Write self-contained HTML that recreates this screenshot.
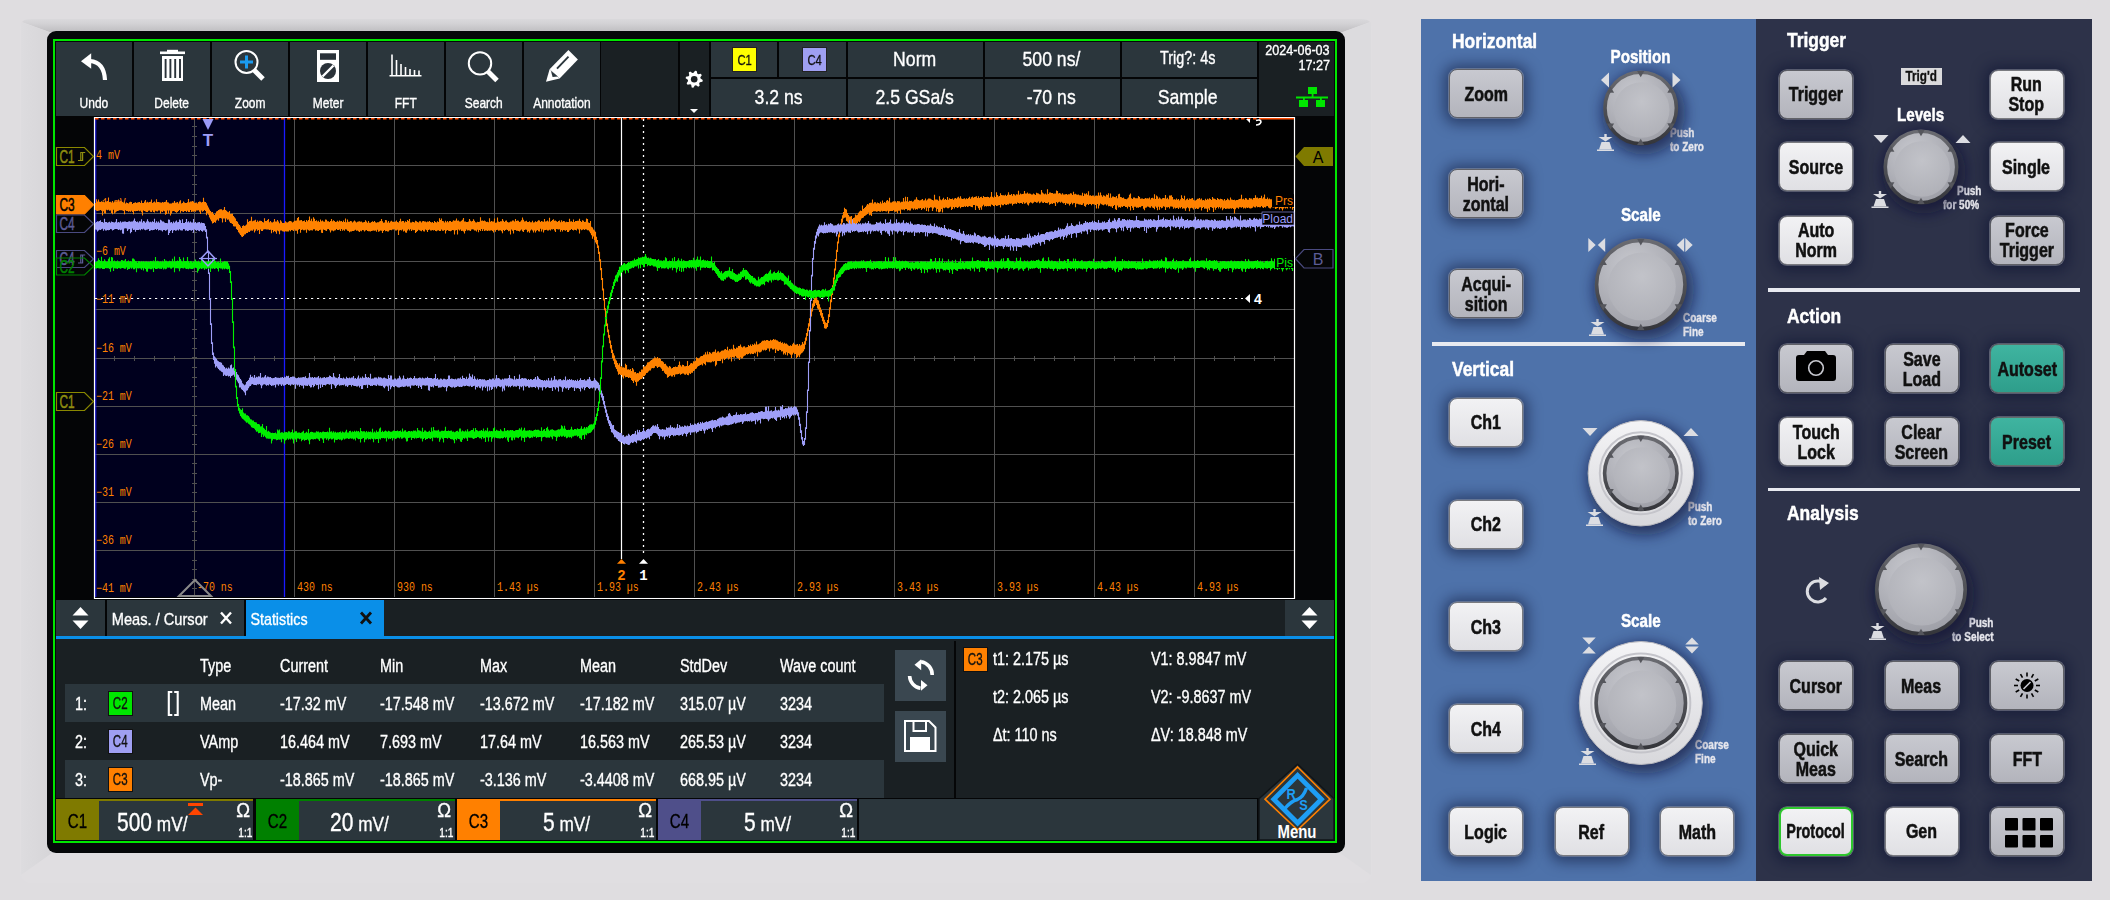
<!DOCTYPE html>
<html><head><meta charset="utf-8">
<style>
*{box-sizing:border-box;margin:0;padding:0}
html,body{width:2110px;height:900px;overflow:hidden;background:#dfdde0;font-family:"Liberation Sans",sans-serif;}
.a{position:absolute}
.t{position:absolute;white-space:nowrap;text-align:center;color:#fff;-webkit-text-stroke:.35px currentColor}
.sx{display:inline-block;transform:scaleX(.8);transform-origin:50% 50%}
#frame{left:47px;top:31px;width:1298px;height:822px;border-radius:9px;background:#050709}
#green{left:53px;top:39px;width:1284px;height:804px;border:2px solid #00e600}
.tb{background:#2a3239}
.dk{background:#1b2023}
</style></head><body>
<svg class="a" style="left:0;top:0" width="2110" height="900">
<defs><linearGradient id="bvt" x1="0" y1="0" x2="0" y2="1"><stop offset="0" stop-color="#dad9dc"/><stop offset=".35" stop-color="#d2d1d4"/><stop offset="1" stop-color="#bcbbbe"/></linearGradient>
<linearGradient id="bvl" x1="0" y1="0" x2="1" y2="0"><stop offset="0" stop-color="#dddcdf"/><stop offset="1" stop-color="#d6d5d8"/></linearGradient></defs>
<rect x="20" y="19" width="1352" height="864" rx="11" fill="#e0dee1"/>
<path d="M22 22Q24 19 31 19H1361Q1368 19 1370 22L1340 33H52Z" fill="url(#bvt)"/>
<path d="M21 22L52 33V853L21 875Z" fill="url(#bvl)"/>
<path d="M1371 22L1340 33V853L1371 875Z" fill="#dcdbde"/>
</svg>
<div class="a" id="frame"></div>
<div class="a" id="green"></div>
<div class="a" style="left:56px;top:42px;width:1278px;height:798px;background:#040506;"></div>
<div class="a" style="left:56px;top:42px;width:76px;height:74px;background:#2b363c;"></div>
<div class="t" style="left:-206px;width:600px;top:94.0px;line-height:18.0px;font-size:15px;color:#fff;font-weight:normal;font-family:"Liberation Sans",sans-serif;"><span class="sx" style="transform:scaleX(0.8)">Undo</span></div>
<div class="a" style="left:134px;top:42px;width:76px;height:74px;background:#2b363c;"></div>
<div class="t" style="left:-128px;width:600px;top:94.0px;line-height:18.0px;font-size:15px;color:#fff;font-weight:normal;font-family:"Liberation Sans",sans-serif;"><span class="sx" style="transform:scaleX(0.8)">Delete</span></div>
<div class="a" style="left:212px;top:42px;width:76px;height:74px;background:#2b363c;"></div>
<div class="t" style="left:-50px;width:600px;top:94.0px;line-height:18.0px;font-size:15px;color:#fff;font-weight:normal;font-family:"Liberation Sans",sans-serif;"><span class="sx" style="transform:scaleX(0.8)">Zoom</span></div>
<div class="a" style="left:290px;top:42px;width:76px;height:74px;background:#2b363c;"></div>
<div class="t" style="left:28px;width:600px;top:94.0px;line-height:18.0px;font-size:15px;color:#fff;font-weight:normal;font-family:"Liberation Sans",sans-serif;"><span class="sx" style="transform:scaleX(0.8)">Meter</span></div>
<div class="a" style="left:368px;top:42px;width:76px;height:74px;background:#2b363c;"></div>
<div class="t" style="left:106px;width:600px;top:94.0px;line-height:18.0px;font-size:15px;color:#fff;font-weight:normal;font-family:"Liberation Sans",sans-serif;"><span class="sx" style="transform:scaleX(0.8)">FFT</span></div>
<div class="a" style="left:446px;top:42px;width:76px;height:74px;background:#2b363c;"></div>
<div class="t" style="left:184px;width:600px;top:94.0px;line-height:18.0px;font-size:15px;color:#fff;font-weight:normal;font-family:"Liberation Sans",sans-serif;"><span class="sx" style="transform:scaleX(0.8)">Search</span></div>
<div class="a" style="left:524px;top:42px;width:76px;height:74px;background:#2b363c;"></div>
<div class="t" style="left:262px;width:600px;top:94.0px;line-height:18.0px;font-size:15px;color:#fff;font-weight:normal;font-family:"Liberation Sans",sans-serif;"><span class="sx" style="transform:scaleX(0.8)">Annotation</span></div>
<div class="a" style="left:601px;top:42px;width:77px;height:74px;background:#1a2023;"></div>
<div class="a" style="left:680px;top:42px;width:29px;height:74px;background:#1a2023;"></div>
<div class="a" style="left:711px;top:42px;width:66px;height:35px;background:#2b363c;"></div>
<div class="a" style="left:779px;top:42px;width:67px;height:35px;background:#2b363c;"></div>
<div class="a" style="left:848px;top:42px;width:135px;height:35px;background:#2b363c;"></div>
<div class="a" style="left:985px;top:42px;width:135px;height:35px;background:#2b363c;"></div>
<div class="a" style="left:1122px;top:42px;width:135px;height:35px;background:#2b363c;"></div>
<div class="a" style="left:711px;top:79px;width:135px;height:37px;background:#2b363c;"></div>
<div class="a" style="left:848px;top:79px;width:135px;height:37px;background:#2b363c;"></div>
<div class="a" style="left:985px;top:79px;width:135px;height:37px;background:#2b363c;"></div>
<div class="a" style="left:1122px;top:79px;width:135px;height:37px;background:#2b363c;"></div>
<div class="a" style="left:1259px;top:42px;width:75px;height:74px;background:#1a2023;"></div>
<div class="t" style="left:615px;width:600px;top:46.4px;line-height:25.2px;font-size:21px;color:#fff;font-weight:normal;font-family:"Liberation Sans",sans-serif;"><span class="sx" style="transform:scaleX(0.84)">Norm</span></div>
<div class="t" style="left:751px;width:600px;top:46.4px;line-height:25.2px;font-size:21px;color:#fff;font-weight:normal;font-family:"Liberation Sans",sans-serif;"><span class="sx" style="transform:scaleX(0.84)">500 ns/</span></div>
<div class="t" style="left:888px;width:600px;top:48.2px;line-height:21.6px;font-size:18px;color:#fff;font-weight:normal;font-family:"Liberation Sans",sans-serif;"><span class="sx" style="transform:scaleX(0.8)">Trig?: 4s</span></div>
<div class="t" style="left:479px;width:600px;top:84.4px;line-height:25.2px;font-size:21px;color:#fff;font-weight:normal;font-family:"Liberation Sans",sans-serif;"><span class="sx" style="transform:scaleX(0.84)">3.2 ns</span></div>
<div class="t" style="left:615px;width:600px;top:84.4px;line-height:25.2px;font-size:21px;color:#fff;font-weight:normal;font-family:"Liberation Sans",sans-serif;"><span class="sx" style="transform:scaleX(0.84)">2.5 GSa/s</span></div>
<div class="t" style="left:751px;width:600px;top:84.4px;line-height:25.2px;font-size:21px;color:#fff;font-weight:normal;font-family:"Liberation Sans",sans-serif;"><span class="sx" style="transform:scaleX(0.84)">-70 ns</span></div>
<div class="t" style="left:888px;width:600px;top:84.4px;line-height:25.2px;font-size:21px;color:#fff;font-weight:normal;font-family:"Liberation Sans",sans-serif;"><span class="sx" style="transform:scaleX(0.84)">Sample</span></div>
<div class="a" style="left:732px;top:47px;width:25px;height:25px;background:#ffff00;border:1px solid #222;"></div>
<div class="t" style="left:444.5px;width:600px;top:50.5px;line-height:18.0px;font-size:15px;color:#111;font-weight:normal;font-family:"Liberation Sans",sans-serif;-webkit-text-stroke:0;"><span class="sx" style="transform:scaleX(0.75)">C1</span></div>
<div class="a" style="left:802px;top:47px;width:25px;height:25px;background:#9f9ff2;border:1px solid #222;"></div>
<div class="t" style="left:514.5px;width:600px;top:50.5px;line-height:18.0px;font-size:15px;color:#111;font-weight:normal;font-family:"Liberation Sans",sans-serif;-webkit-text-stroke:0;"><span class="sx" style="transform:scaleX(0.75)">C4</span></div>
<div class="t" style="right:780px;text-align:right;top:41.6px;line-height:16.8px;font-size:14px;color:#fff;font-weight:normal;font-family:"Liberation Sans",sans-serif;-webkit-text-stroke:0;"><span class="sx" style="transform:scaleX(0.9);transform-origin:100% 50%">2024-06-03</span></div>
<div class="t" style="right:780px;text-align:right;top:56.6px;line-height:16.8px;font-size:14px;color:#fff;font-weight:normal;font-family:"Liberation Sans",sans-serif;-webkit-text-stroke:0;"><span class="sx" style="transform:scaleX(0.9);transform-origin:100% 50%">17:27</span></div>
<div class="a" style="left:56px;top:600px;width:49px;height:36px;background:#2b363c;"></div>
<div class="a" style="left:107px;top:600px;width:137px;height:36px;background:#2b363c;"></div>
<div class="a" style="left:246px;top:600px;width:138px;height:36px;background:#0a8fe8;"></div>
<div class="a" style="left:384px;top:600px;width:901px;height:36px;background:#1a2023;"></div>
<div class="a" style="left:1285px;top:600px;width:49px;height:36px;background:#2b363c;"></div>
<div class="a" style="left:56px;top:636px;width:1278px;height:3px;background:#0a8fe8;"></div>
<div class="t" style="left:-140px;width:600px;top:609.8px;line-height:20.4px;font-size:17px;color:#fff;font-weight:normal;font-family:"Liberation Sans",sans-serif;"><span class="sx" style="transform:scaleX(0.86)">Meas. / Cursor</span></div>
<div class="t" style="left:-21px;width:600px;top:609.8px;line-height:20.4px;font-size:17px;color:#fff;font-weight:normal;font-family:"Liberation Sans",sans-serif;"><span class="sx" style="transform:scaleX(0.84)">Statistics</span></div>
<div class="a" style="left:56px;top:639px;width:1278px;height:159px;background:#1a2023;"></div>
<div class="a" style="left:65px;top:684px;width:819px;height:38px;background:#2b363c;"></div>
<div class="a" style="left:65px;top:760px;width:819px;height:38px;background:#2b363c;"></div>
<div class="a" style="left:954px;top:641px;width:2px;height:157px;background:#050607;"></div>
<div class="a" style="left:56px;top:799px;width:1278px;height:41px;background:#040506;"></div>
<div class="a" style="left:56px;top:799px;width:197px;height:41px;background:#2b363c;"></div>
<div class="a" style="left:99px;top:799px;width:154px;height:2px;background:#7f7a00;"></div>
<div class="a" style="left:56px;top:799px;width:43px;height:41px;background:#7f7a00;"></div>
<div class="a" style="left:256px;top:799px;width:199px;height:41px;background:#2b363c;"></div>
<div class="a" style="left:299px;top:799px;width:156px;height:2px;background:#008000;"></div>
<div class="a" style="left:256px;top:799px;width:43px;height:41px;background:#008000;"></div>
<div class="a" style="left:457px;top:799px;width:199px;height:41px;background:#2b363c;"></div>
<div class="a" style="left:500px;top:799px;width:156px;height:2px;background:#ff8000;"></div>
<div class="a" style="left:457px;top:799px;width:43px;height:41px;background:#ff8000;"></div>
<div class="a" style="left:658px;top:799px;width:199px;height:41px;background:#2b363c;"></div>
<div class="a" style="left:701px;top:799px;width:156px;height:2px;background:#4f4f8a;"></div>
<div class="a" style="left:658px;top:799px;width:43px;height:41px;background:#4f4f8a;"></div>
<div class="a" style="left:859px;top:799px;width:398px;height:41px;background:#2b363c;"></div>

<div class="t" style="left:200px;text-align:left;top:656.2px;line-height:21.6px;font-size:18px;color:#fff;font-weight:normal;font-family:"Liberation Sans",sans-serif;"><span class="sx" style="transform:scaleX(0.8);transform-origin:0 50%">Type</span></div>

<div class="t" style="left:280px;text-align:left;top:656.2px;line-height:21.6px;font-size:18px;color:#fff;font-weight:normal;font-family:"Liberation Sans",sans-serif;"><span class="sx" style="transform:scaleX(0.8);transform-origin:0 50%">Current</span></div>

<div class="t" style="left:380px;text-align:left;top:656.2px;line-height:21.6px;font-size:18px;color:#fff;font-weight:normal;font-family:"Liberation Sans",sans-serif;"><span class="sx" style="transform:scaleX(0.8);transform-origin:0 50%">Min</span></div>

<div class="t" style="left:480px;text-align:left;top:656.2px;line-height:21.6px;font-size:18px;color:#fff;font-weight:normal;font-family:"Liberation Sans",sans-serif;"><span class="sx" style="transform:scaleX(0.8);transform-origin:0 50%">Max</span></div>

<div class="t" style="left:580px;text-align:left;top:656.2px;line-height:21.6px;font-size:18px;color:#fff;font-weight:normal;font-family:"Liberation Sans",sans-serif;"><span class="sx" style="transform:scaleX(0.8);transform-origin:0 50%">Mean</span></div>

<div class="t" style="left:680px;text-align:left;top:656.2px;line-height:21.6px;font-size:18px;color:#fff;font-weight:normal;font-family:"Liberation Sans",sans-serif;"><span class="sx" style="transform:scaleX(0.8);transform-origin:0 50%">StdDev</span></div>

<div class="t" style="left:780px;text-align:left;top:656.2px;line-height:21.6px;font-size:18px;color:#fff;font-weight:normal;font-family:"Liberation Sans",sans-serif;"><span class="sx" style="transform:scaleX(0.8);transform-origin:0 50%">Wave count</span></div>
<div class="t" style="left:75px;text-align:left;top:694.2px;line-height:21.6px;font-size:18px;color:#fff;font-weight:normal;font-family:"Liberation Sans",sans-serif;"><span class="sx" style="transform:scaleX(0.8);transform-origin:0 50%">1:</span></div>
<div class="a" style="left:108px;top:691px;width:25px;height:25px;background:#00e600;border:1px solid #111;"></div>
<div class="t" style="left:-179.5px;width:600px;top:693.9px;line-height:19.2px;font-size:16px;color:#111;font-weight:normal;font-family:"Liberation Sans",sans-serif;-webkit-text-stroke:0;"><span class="sx" style="transform:scaleX(0.72)">C2</span></div>
<div class="t" style="left:200px;text-align:left;top:694.2px;line-height:21.6px;font-size:18px;color:#fff;font-weight:normal;font-family:"Liberation Sans",sans-serif;"><span class="sx" style="transform:scaleX(0.8);transform-origin:0 50%">Mean</span></div>
<div class="t" style="left:280px;text-align:left;top:694.2px;line-height:21.6px;font-size:18px;color:#fff;font-weight:normal;font-family:"Liberation Sans",sans-serif;"><span class="sx" style="transform:scaleX(0.8);transform-origin:0 50%">-17.32 mV</span></div>
<div class="t" style="left:380px;text-align:left;top:694.2px;line-height:21.6px;font-size:18px;color:#fff;font-weight:normal;font-family:"Liberation Sans",sans-serif;"><span class="sx" style="transform:scaleX(0.8);transform-origin:0 50%">-17.548 mV</span></div>
<div class="t" style="left:480px;text-align:left;top:694.2px;line-height:21.6px;font-size:18px;color:#fff;font-weight:normal;font-family:"Liberation Sans",sans-serif;"><span class="sx" style="transform:scaleX(0.8);transform-origin:0 50%">-13.672 mV</span></div>
<div class="t" style="left:580px;text-align:left;top:694.2px;line-height:21.6px;font-size:18px;color:#fff;font-weight:normal;font-family:"Liberation Sans",sans-serif;"><span class="sx" style="transform:scaleX(0.8);transform-origin:0 50%">-17.182 mV</span></div>
<div class="t" style="left:680px;text-align:left;top:694.2px;line-height:21.6px;font-size:18px;color:#fff;font-weight:normal;font-family:"Liberation Sans",sans-serif;"><span class="sx" style="transform:scaleX(0.8);transform-origin:0 50%">315.07 µV</span></div>
<div class="t" style="left:780px;text-align:left;top:694.2px;line-height:21.6px;font-size:18px;color:#fff;font-weight:normal;font-family:"Liberation Sans",sans-serif;"><span class="sx" style="transform:scaleX(0.8);transform-origin:0 50%">3234</span></div>
<div class="t" style="left:75px;text-align:left;top:732.2px;line-height:21.6px;font-size:18px;color:#fff;font-weight:normal;font-family:"Liberation Sans",sans-serif;"><span class="sx" style="transform:scaleX(0.8);transform-origin:0 50%">2:</span></div>
<div class="a" style="left:108px;top:729px;width:25px;height:25px;background:#9f9ff2;border:1px solid #111;"></div>
<div class="t" style="left:-179.5px;width:600px;top:731.9px;line-height:19.2px;font-size:16px;color:#111;font-weight:normal;font-family:"Liberation Sans",sans-serif;-webkit-text-stroke:0;"><span class="sx" style="transform:scaleX(0.72)">C4</span></div>
<div class="t" style="left:200px;text-align:left;top:732.2px;line-height:21.6px;font-size:18px;color:#fff;font-weight:normal;font-family:"Liberation Sans",sans-serif;"><span class="sx" style="transform:scaleX(0.8);transform-origin:0 50%">VAmp</span></div>
<div class="t" style="left:280px;text-align:left;top:732.2px;line-height:21.6px;font-size:18px;color:#fff;font-weight:normal;font-family:"Liberation Sans",sans-serif;"><span class="sx" style="transform:scaleX(0.8);transform-origin:0 50%">16.464 mV</span></div>
<div class="t" style="left:380px;text-align:left;top:732.2px;line-height:21.6px;font-size:18px;color:#fff;font-weight:normal;font-family:"Liberation Sans",sans-serif;"><span class="sx" style="transform:scaleX(0.8);transform-origin:0 50%">7.693 mV</span></div>
<div class="t" style="left:480px;text-align:left;top:732.2px;line-height:21.6px;font-size:18px;color:#fff;font-weight:normal;font-family:"Liberation Sans",sans-serif;"><span class="sx" style="transform:scaleX(0.8);transform-origin:0 50%">17.64 mV</span></div>
<div class="t" style="left:580px;text-align:left;top:732.2px;line-height:21.6px;font-size:18px;color:#fff;font-weight:normal;font-family:"Liberation Sans",sans-serif;"><span class="sx" style="transform:scaleX(0.8);transform-origin:0 50%">16.563 mV</span></div>
<div class="t" style="left:680px;text-align:left;top:732.2px;line-height:21.6px;font-size:18px;color:#fff;font-weight:normal;font-family:"Liberation Sans",sans-serif;"><span class="sx" style="transform:scaleX(0.8);transform-origin:0 50%">265.53 µV</span></div>
<div class="t" style="left:780px;text-align:left;top:732.2px;line-height:21.6px;font-size:18px;color:#fff;font-weight:normal;font-family:"Liberation Sans",sans-serif;"><span class="sx" style="transform:scaleX(0.8);transform-origin:0 50%">3234</span></div>
<div class="t" style="left:75px;text-align:left;top:770.2px;line-height:21.6px;font-size:18px;color:#fff;font-weight:normal;font-family:"Liberation Sans",sans-serif;"><span class="sx" style="transform:scaleX(0.8);transform-origin:0 50%">3:</span></div>
<div class="a" style="left:108px;top:767px;width:25px;height:25px;background:#ff8000;border:1px solid #111;"></div>
<div class="t" style="left:-179.5px;width:600px;top:769.9px;line-height:19.2px;font-size:16px;color:#111;font-weight:normal;font-family:"Liberation Sans",sans-serif;-webkit-text-stroke:0;"><span class="sx" style="transform:scaleX(0.72)">C3</span></div>
<div class="t" style="left:200px;text-align:left;top:770.2px;line-height:21.6px;font-size:18px;color:#fff;font-weight:normal;font-family:"Liberation Sans",sans-serif;"><span class="sx" style="transform:scaleX(0.8);transform-origin:0 50%">Vp-</span></div>
<div class="t" style="left:280px;text-align:left;top:770.2px;line-height:21.6px;font-size:18px;color:#fff;font-weight:normal;font-family:"Liberation Sans",sans-serif;"><span class="sx" style="transform:scaleX(0.8);transform-origin:0 50%">-18.865 mV</span></div>
<div class="t" style="left:380px;text-align:left;top:770.2px;line-height:21.6px;font-size:18px;color:#fff;font-weight:normal;font-family:"Liberation Sans",sans-serif;"><span class="sx" style="transform:scaleX(0.8);transform-origin:0 50%">-18.865 mV</span></div>
<div class="t" style="left:480px;text-align:left;top:770.2px;line-height:21.6px;font-size:18px;color:#fff;font-weight:normal;font-family:"Liberation Sans",sans-serif;"><span class="sx" style="transform:scaleX(0.8);transform-origin:0 50%">-3.136 mV</span></div>
<div class="t" style="left:580px;text-align:left;top:770.2px;line-height:21.6px;font-size:18px;color:#fff;font-weight:normal;font-family:"Liberation Sans",sans-serif;"><span class="sx" style="transform:scaleX(0.8);transform-origin:0 50%">-3.4408 mV</span></div>
<div class="t" style="left:680px;text-align:left;top:770.2px;line-height:21.6px;font-size:18px;color:#fff;font-weight:normal;font-family:"Liberation Sans",sans-serif;"><span class="sx" style="transform:scaleX(0.8);transform-origin:0 50%">668.95 µV</span></div>
<div class="t" style="left:780px;text-align:left;top:770.2px;line-height:21.6px;font-size:18px;color:#fff;font-weight:normal;font-family:"Liberation Sans",sans-serif;"><span class="sx" style="transform:scaleX(0.8);transform-origin:0 50%">3234</span></div>
<div class="a" style="left:963px;top:647px;width:25px;height:25px;background:#ff8000;border:1px solid #111;"></div>
<div class="t" style="left:675.5px;width:600px;top:649.9px;line-height:19.2px;font-size:16px;color:#111;font-weight:normal;font-family:"Liberation Sans",sans-serif;-webkit-text-stroke:0;"><span class="sx" style="transform:scaleX(0.72)">C3</span></div>
<div class="t" style="left:993px;text-align:left;top:649.2px;line-height:21.6px;font-size:18px;color:#fff;font-weight:normal;font-family:"Liberation Sans",sans-serif;"><span class="sx" style="transform:scaleX(0.8);transform-origin:0 50%">t1: 2.175 µs</span></div>
<div class="t" style="left:1151px;text-align:left;top:649.2px;line-height:21.6px;font-size:18px;color:#fff;font-weight:normal;font-family:"Liberation Sans",sans-serif;"><span class="sx" style="transform:scaleX(0.8);transform-origin:0 50%">V1: 8.9847 mV</span></div>
<div class="t" style="left:993px;text-align:left;top:687.2px;line-height:21.6px;font-size:18px;color:#fff;font-weight:normal;font-family:"Liberation Sans",sans-serif;"><span class="sx" style="transform:scaleX(0.8);transform-origin:0 50%">t2: 2.065 µs</span></div>
<div class="t" style="left:1151px;text-align:left;top:687.2px;line-height:21.6px;font-size:18px;color:#fff;font-weight:normal;font-family:"Liberation Sans",sans-serif;"><span class="sx" style="transform:scaleX(0.8);transform-origin:0 50%">V2: -9.8637 mV</span></div>
<div class="t" style="left:993px;text-align:left;top:725.2px;line-height:21.6px;font-size:18px;color:#fff;font-weight:normal;font-family:"Liberation Sans",sans-serif;"><span class="sx" style="transform:scaleX(0.8);transform-origin:0 50%">Δt: 110 ns</span></div>
<div class="t" style="left:1151px;text-align:left;top:725.2px;line-height:21.6px;font-size:18px;color:#fff;font-weight:normal;font-family:"Liberation Sans",sans-serif;"><span class="sx" style="transform:scaleX(0.8);transform-origin:0 50%">ΔV: 18.848 mV</span></div>
<div class="a" style="left:895px;top:650px;width:51px;height:51px;background:#3a4750;"></div>
<div class="a" style="left:895px;top:711px;width:51px;height:51px;background:#3a4750;"></div>
<div class="t" style="left:-222.5px;width:600px;top:808.4px;line-height:25.2px;font-size:21px;color:#000;font-weight:normal;font-family:"Liberation Sans",sans-serif;"><span class="sx" style="transform:scaleX(0.72)">C1</span></div>
<div class="t" style="left:116.5px;text-align:left;top:806.5px;line-height:30px;color:#fff;"><span class="sx" style="transform:scaleX(.84);transform-origin:0 50%"><span style="font-size:25px">500</span><span style="font-size:20.5px"> mV/</span></span></div>
<div class="t" style="left:-22.5px;width:600px;top:808.4px;line-height:25.2px;font-size:21px;color:#000;font-weight:normal;font-family:"Liberation Sans",sans-serif;"><span class="sx" style="transform:scaleX(0.72)">C2</span></div>
<div class="t" style="left:329.5px;text-align:left;top:806.5px;line-height:30px;color:#fff;"><span class="sx" style="transform:scaleX(.84);transform-origin:0 50%"><span style="font-size:25px">20</span><span style="font-size:20.5px"> mV/</span></span></div>
<div class="t" style="left:178.5px;width:600px;top:808.4px;line-height:25.2px;font-size:21px;color:#000;font-weight:normal;font-family:"Liberation Sans",sans-serif;"><span class="sx" style="transform:scaleX(0.72)">C3</span></div>
<div class="t" style="left:543px;text-align:left;top:806.5px;line-height:30px;color:#fff;"><span class="sx" style="transform:scaleX(.84);transform-origin:0 50%"><span style="font-size:25px">5</span><span style="font-size:20.5px"> mV/</span></span></div>
<div class="t" style="left:379.5px;width:600px;top:808.4px;line-height:25.2px;font-size:21px;color:#000;font-weight:normal;font-family:"Liberation Sans",sans-serif;"><span class="sx" style="transform:scaleX(0.72)">C4</span></div>
<div class="t" style="left:743.5px;text-align:left;top:806.5px;line-height:30px;color:#fff;"><span class="sx" style="transform:scaleX(.84);transform-origin:0 50%"><span style="font-size:25px">5</span><span style="font-size:20.5px"> mV/</span></span></div>
<div class="t" style="left:-57px;width:600px;top:798.8px;line-height:23.4px;font-size:19.5px;color:#fff;font-weight:normal;font-family:"Liberation Sans",sans-serif;"><span class="sx" style="transform:scaleX(0.95)">Ω</span></div>
<div class="t" style="left:-55px;width:600px;top:825.8px;line-height:14.4px;font-size:12px;color:#fff;font-weight:normal;font-family:"Liberation Sans",sans-serif;"><span class="sx" style="transform:scaleX(0.85)">1:1</span></div>
<div class="t" style="left:144px;width:600px;top:798.8px;line-height:23.4px;font-size:19.5px;color:#fff;font-weight:normal;font-family:"Liberation Sans",sans-serif;"><span class="sx" style="transform:scaleX(0.95)">Ω</span></div>
<div class="t" style="left:146px;width:600px;top:825.8px;line-height:14.4px;font-size:12px;color:#fff;font-weight:normal;font-family:"Liberation Sans",sans-serif;"><span class="sx" style="transform:scaleX(0.85)">1:1</span></div>
<div class="t" style="left:345px;width:600px;top:798.8px;line-height:23.4px;font-size:19.5px;color:#fff;font-weight:normal;font-family:"Liberation Sans",sans-serif;"><span class="sx" style="transform:scaleX(0.95)">Ω</span></div>
<div class="t" style="left:347px;width:600px;top:825.8px;line-height:14.4px;font-size:12px;color:#fff;font-weight:normal;font-family:"Liberation Sans",sans-serif;"><span class="sx" style="transform:scaleX(0.85)">1:1</span></div>
<div class="t" style="left:546px;width:600px;top:798.8px;line-height:23.4px;font-size:19.5px;color:#fff;font-weight:normal;font-family:"Liberation Sans",sans-serif;"><span class="sx" style="transform:scaleX(0.95)">Ω</span></div>
<div class="t" style="left:548px;width:600px;top:825.8px;line-height:14.4px;font-size:12px;color:#fff;font-weight:normal;font-family:"Liberation Sans",sans-serif;"><span class="sx" style="transform:scaleX(0.85)">1:1</span></div>
<svg class="a" style="left:0;top:0" width="2110" height="900" viewBox="0 0 2110 900">
<rect x="95" y="117" width="1200" height="480" fill="#000"/>
<rect x="95" y="117" width="189" height="480" fill="#00001e"/>
<path d="M194.5 117V597M294.5 117V597M394.5 117V597M494.5 117V597M594.5 117V597M694.5 117V597M794.5 117V597M894.5 117V597M994.5 117V597M1094.5 117V597M1194.5 117V597M95 165.5H1295M95 213.5H1295M95 261.5H1295M95 309.5H1295M95 358.5H1295M95 406.5H1295M95 454.5H1295M95 502.5H1295M95 550.5H1295" stroke="#505050" stroke-width="1" fill="none"/>
<path d="M192 117.5H197M192 126.5H197M192 136.5H197M192 146.5H197M192 155.5H197M192 165.5H197M192 175.5H197M192 184.5H197M192 194.5H197M192 203.5H197M192 213.5H197M192 223.5H197M192 232.5H197M192 242.5H197M192 252.5H197M192 261.5H197M192 271.5H197M192 280.5H197M192 290.5H197M192 300.5H197M192 309.5H197M192 319.5H197M192 329.5H197M192 338.5H197M192 348.5H197M192 357.5H197M192 367.5H197M192 377.5H197M192 386.5H197M192 396.5H197M192 406.5H197M192 415.5H197M192 425.5H197M192 434.5H197M192 444.5H197M192 454.5H197M192 463.5H197M192 473.5H197M192 483.5H197M192 492.5H197M192 502.5H197M192 511.5H197M192 521.5H197M192 531.5H197M192 540.5H197M192 550.5H197M192 560.5H197M192 569.5H197M192 579.5H197M192 588.5H197M94.5 356V361M114.5 356V361M134.5 356V361M154.5 356V361M174.5 356V361M194.5 356V361M214.5 356V361M234.5 356V361M254.5 356V361M274.5 356V361M294.5 356V361M314.5 356V361M334.5 356V361M354.5 356V361M374.5 356V361M394.5 356V361M414.5 356V361M434.5 356V361M454.5 356V361M474.5 356V361M494.5 356V361M514.5 356V361M534.5 356V361M554.5 356V361M574.5 356V361M594.5 356V361M614.5 356V361M634.5 356V361M654.5 356V361M674.5 356V361M694.5 356V361M714.5 356V361M734.5 356V361M754.5 356V361M774.5 356V361M794.5 356V361M814.5 356V361M834.5 356V361M854.5 356V361M874.5 356V361M894.5 356V361M914.5 356V361M934.5 356V361M954.5 356V361M974.5 356V361M994.5 356V361M1014.5 356V361M1034.5 356V361M1054.5 356V361M1074.5 356V361M1094.5 356V361M1114.5 356V361M1134.5 356V361M1154.5 356V361M1174.5 356V361M1194.5 356V361M1214.5 356V361M1234.5 356V361M1254.5 356V361M1274.5 356V361" stroke="#505050" stroke-width="1" fill="none"/>
<path d="M284.5 117V597" stroke="#1a1aff" stroke-width="1.3"/>
<path d="M95.8 117V597" stroke="#1a1aff" stroke-width="1"/>
<path d="M94.5 117V598.5H1294.5V117" stroke="#fff" stroke-width="1.2" fill="none"/>
<path d="M95 117.5H1295" stroke="#fff" stroke-width="1.2"/>
<path d="M95 118.7H1261" stroke="#ff4a00" stroke-width="1.4" stroke-dasharray="3.5 2.5"/>
<path d="M1261 118.7H1294" stroke="#ff4a00" stroke-width="1.4"/>
<path d="M95 298.5H1243" stroke="#fff" stroke-width="1.2" stroke-dasharray="2.2 3.8"/>
<path d="M621.5 118V559" stroke="#fff" stroke-width="1.2"/>
<path d="M643.5 119V556" stroke="#fff" stroke-width="1.3" stroke-dasharray="2 4"/>
<path d="M617 563.8L621.5 559L626 563.8Z" fill="#ff8000"/>
<path d="M639 563.8L643.5 559L648 563.8Z" fill="#fff"/>
<text x="621.5" y="579.5" font-size="14" fill="#ff8000" text-anchor="middle" font-family="Liberation Mono" font-weight="bold">2</text>
<text x="643.5" y="579.5" font-size="14" fill="#fff" text-anchor="middle" font-family="Liberation Mono" font-weight="bold">1</text>
<path d="M1245 298.5L1250 294V303Z" fill="#fff"/>
<text x="1258" y="304" font-size="14" fill="#fff" text-anchor="middle" font-family="Liberation Sans" font-weight="bold">4</text>
<path d="M1246 119L1250 119L1250 123Z" fill="#fff"/>
<path d="M1256 120.5Q1261 119 1261 122Q1260 125 1256 125" stroke="#fff" stroke-width="1.6" fill="none"/>
<text x="96" y="159" font-size="12" fill="#ff8000" font-family="Liberation Mono" transform="translate(96 0) scale(.83 1) translate(-96 0)">4 mV</text>
<text x="96" y="207" font-size="12" fill="#ff8000" font-family="Liberation Mono" transform="translate(96 0) scale(.83 1) translate(-96 0)">&#8722;1 mV</text>
<text x="96" y="255" font-size="12" fill="#ff8000" font-family="Liberation Mono" transform="translate(96 0) scale(.83 1) translate(-96 0)">&#8722;6 mV</text>
<text x="96" y="303" font-size="12" fill="#ff8000" font-family="Liberation Mono" transform="translate(96 0) scale(.83 1) translate(-96 0)">&#8722;11 mV</text>
<text x="96" y="352" font-size="12" fill="#ff8000" font-family="Liberation Mono" transform="translate(96 0) scale(.83 1) translate(-96 0)">&#8722;16 mV</text>
<text x="96" y="400" font-size="12" fill="#ff8000" font-family="Liberation Mono" transform="translate(96 0) scale(.83 1) translate(-96 0)">&#8722;21 mV</text>
<text x="96" y="448" font-size="12" fill="#ff8000" font-family="Liberation Mono" transform="translate(96 0) scale(.83 1) translate(-96 0)">&#8722;26 mV</text>
<text x="96" y="496" font-size="12" fill="#ff8000" font-family="Liberation Mono" transform="translate(96 0) scale(.83 1) translate(-96 0)">&#8722;31 mV</text>
<text x="96" y="544" font-size="12" fill="#ff8000" font-family="Liberation Mono" transform="translate(96 0) scale(.83 1) translate(-96 0)">&#8722;36 mV</text>
<text x="96" y="592" font-size="12" fill="#ff8000" font-family="Liberation Mono" transform="translate(96 0) scale(.83 1) translate(-96 0)">&#8722;41 mV</text>
<text x="197" y="591" font-size="12" fill="#ff8000" font-family="Liberation Mono" transform="translate(197 0) scale(.83 1) translate(-197 0)">-70 ns</text>
<text x="297" y="591" font-size="12" fill="#ff8000" font-family="Liberation Mono" transform="translate(297 0) scale(.83 1) translate(-297 0)">430 ns</text>
<text x="397" y="591" font-size="12" fill="#ff8000" font-family="Liberation Mono" transform="translate(397 0) scale(.83 1) translate(-397 0)">930 ns</text>
<text x="497" y="591" font-size="12" fill="#ff8000" font-family="Liberation Mono" transform="translate(497 0) scale(.83 1) translate(-497 0)">1.43 µs</text>
<text x="597" y="591" font-size="12" fill="#ff8000" font-family="Liberation Mono" transform="translate(597 0) scale(.83 1) translate(-597 0)">1.93 µs</text>
<text x="697" y="591" font-size="12" fill="#ff8000" font-family="Liberation Mono" transform="translate(697 0) scale(.83 1) translate(-697 0)">2.43 µs</text>
<text x="797" y="591" font-size="12" fill="#ff8000" font-family="Liberation Mono" transform="translate(797 0) scale(.83 1) translate(-797 0)">2.93 µs</text>
<text x="897" y="591" font-size="12" fill="#ff8000" font-family="Liberation Mono" transform="translate(897 0) scale(.83 1) translate(-897 0)">3.43 µs</text>
<text x="997" y="591" font-size="12" fill="#ff8000" font-family="Liberation Mono" transform="translate(997 0) scale(.83 1) translate(-997 0)">3.93 µs</text>
<text x="1097" y="591" font-size="12" fill="#ff8000" font-family="Liberation Mono" transform="translate(1097 0) scale(.83 1) translate(-1097 0)">4.43 µs</text>
<text x="1197" y="591" font-size="12" fill="#ff8000" font-family="Liberation Mono" transform="translate(1197 0) scale(.83 1) translate(-1197 0)">4.93 µs</text>
<path d="M95.5 203.0V209.9M96.5 199.3V210.8M97.5 201.4V211.0M98.5 199.5V210.7M99.5 201.7V210.6M100.5 202.0V209.9M101.5 201.2V210.8M102.5 201.7V215.5M103.5 201.5V211.2M104.5 202.3V213.2M105.5 201.1V213.5M106.5 201.5V209.7M107.5 201.0V210.3M108.5 197.5V209.8M109.5 202.0V210.7M110.5 201.8V210.5M111.5 202.6V212.9M112.5 200.9V214.3M113.5 202.5V209.7M114.5 201.4V213.6M115.5 202.1V212.5M116.5 201.4V211.5M117.5 201.8V211.0M118.5 199.5V210.7M119.5 201.8V210.2M120.5 200.8V210.2M121.5 201.3V210.3M122.5 201.9V210.6M123.5 202.7V211.1M124.5 201.8V214.3M125.5 203.4V210.3M126.5 202.6V210.9M127.5 203.1V211.0M128.5 203.5V211.7M129.5 202.2V211.2M130.5 201.8V211.7M131.5 201.9V210.7M132.5 203.9V212.1M133.5 203.0V214.3M134.5 202.7V211.0M135.5 202.2V211.3M136.5 203.1V211.1M137.5 202.6V210.9M138.5 202.3V210.5M139.5 201.9V211.2M140.5 203.1V210.8M141.5 200.4V212.2M142.5 203.1V215.5M143.5 202.9V210.6M144.5 201.6V211.1M145.5 200.1V211.4M146.5 202.4V211.9M147.5 201.8V211.9M148.5 202.6V210.7M149.5 202.1V210.6M150.5 201.7V211.8M151.5 199.4V212.1M152.5 202.9V210.6M153.5 202.3V211.9M154.5 201.6V212.5M155.5 202.6V210.8M156.5 199.2V211.2M157.5 202.0V211.5M158.5 202.1V210.4M159.5 202.3V210.4M160.5 202.4V213.4M161.5 202.8V211.6M162.5 202.0V212.0M163.5 202.6V210.7M164.5 202.1V211.3M165.5 201.7V214.8M166.5 200.0V214.0M167.5 202.2V210.5M168.5 202.5V213.4M169.5 203.4V210.6M170.5 203.5V215.6M171.5 203.4V213.4M172.5 202.7V211.3M173.5 202.7V210.9M174.5 201.0V211.2M175.5 202.7V212.0M176.5 202.5V212.8M177.5 202.1V212.1M178.5 203.4V211.0M179.5 201.6V210.1M180.5 200.2V212.7M181.5 203.5V211.0M182.5 203.0V211.5M183.5 201.6V212.0M184.5 202.4V211.0M185.5 202.9V211.1M186.5 202.9V212.1M187.5 202.3V210.7M188.5 199.0V211.9M189.5 202.3V212.0M190.5 201.4V210.1M191.5 201.6V211.9M192.5 201.1V211.4M193.5 201.5V211.8M194.5 202.9V211.0M195.5 202.7V211.8M196.5 202.6V210.5M197.5 203.5V210.5M198.5 201.9V210.2M199.5 201.4V211.8M200.5 201.7V213.9M201.5 202.4V210.6M202.5 202.0V211.8M203.5 197.7V210.9M204.5 201.7V210.1M205.5 202.0V211.1M206.5 203.2V215.3M207.5 205.4V213.2M208.5 207.4V214.7M209.5 209.4V217.5M210.5 210.9V219.5M211.5 212.3V221.3M212.5 212.1V223.6M213.5 214.1V223.1M214.5 214.9V222.1M215.5 213.5V222.8M216.5 211.6V220.5M217.5 211.0V219.5M218.5 209.9V220.8M219.5 209.6V218.2M220.5 209.3V218.1M221.5 209.3V218.5M222.5 210.2V222.6M223.5 209.8V218.5M224.5 206.9V218.6M225.5 209.9V221.9M226.5 210.7V218.4M227.5 211.8V219.7M228.5 212.3V219.6M229.5 210.9V221.6M230.5 214.0V222.9M231.5 213.7V223.3M232.5 213.7V224.1M233.5 216.0V226.3M234.5 217.3V226.4M235.5 218.4V226.6M236.5 220.9V229.0M237.5 221.7V230.1M238.5 223.7V232.2M239.5 224.9V233.6M240.5 226.5V234.9M241.5 228.0V236.6M242.5 226.1V237.1M243.5 225.3V235.9M244.5 226.0V234.5M245.5 225.4V234.3M246.5 224.4V233.1M247.5 219.2V233.1M248.5 222.0V231.7M249.5 221.0V231.9M250.5 220.8V230.8M251.5 216.8V230.4M252.5 221.3V230.8M253.5 220.7V229.4M254.5 220.5V232.5M255.5 219.8V230.8M256.5 222.0V229.3M257.5 220.4V230.8M258.5 221.8V229.9M259.5 220.7V234.0M260.5 220.7V229.5M261.5 221.0V231.0M262.5 222.1V231.1M263.5 222.4V229.6M264.5 218.2V229.3M265.5 221.1V229.2M266.5 221.1V229.4M267.5 219.9V229.4M268.5 219.0V229.5M269.5 222.3V230.1M270.5 221.0V229.7M271.5 222.2V233.2M272.5 222.6V230.1M273.5 221.7V232.2M274.5 218.9V231.0M275.5 221.5V231.7M276.5 221.4V233.7M277.5 220.1V230.5M278.5 221.5V231.3M279.5 223.3V234.3M280.5 220.2V230.5M281.5 221.6V230.5M282.5 223.1V231.3M283.5 223.1V231.6M284.5 222.7V231.8M285.5 221.2V231.2M286.5 222.2V231.5M287.5 222.6V231.6M288.5 221.7V231.4M289.5 221.1V230.3M290.5 221.0V231.3M291.5 221.6V229.9M292.5 222.4V230.2M293.5 221.7V231.0M294.5 220.7V229.4M295.5 220.8V230.7M296.5 220.5V230.8M297.5 218.0V233.8M298.5 216.9V229.8M299.5 220.4V229.1M300.5 220.2V232.8M301.5 219.9V229.9M302.5 221.2V229.4M303.5 221.0V230.2M304.5 220.6V230.2M305.5 221.9V229.7M306.5 220.0V232.8M307.5 221.3V229.4M308.5 219.9V230.3M309.5 216.5V230.7M310.5 220.7V230.2M311.5 218.8V230.3M312.5 221.2V230.6M313.5 217.3V229.2M314.5 218.7V229.3M315.5 221.0V230.7M316.5 220.3V230.2M317.5 221.5V230.8M318.5 220.7V231.0M319.5 221.9V230.0M320.5 219.6V229.8M321.5 221.2V232.7M322.5 220.5V233.1M323.5 221.5V229.4M324.5 221.7V229.9M325.5 219.5V230.4M326.5 219.8V230.9M327.5 221.3V229.3M328.5 221.3V228.9M329.5 221.9V230.2M330.5 220.9V232.5M331.5 218.9V230.4M332.5 221.2V230.6M333.5 220.2V231.3M334.5 220.9V230.6M335.5 222.0V230.3M336.5 221.7V229.1M337.5 220.8V230.0M338.5 221.8V229.9M339.5 220.5V229.4M340.5 221.2V230.9M341.5 221.0V228.9M342.5 222.1V230.8M343.5 220.4V229.7M344.5 221.9V230.7M345.5 218.5V229.3M346.5 222.2V229.4M347.5 219.6V230.7M348.5 221.8V231.1M349.5 221.8V232.3M350.5 221.1V231.5M351.5 221.2V231.4M352.5 222.6V231.1M353.5 221.5V231.0M354.5 220.5V230.5M355.5 221.6V229.8M356.5 222.4V230.7M357.5 221.8V230.5M358.5 221.6V231.2M359.5 221.3V232.0M360.5 221.8V230.7M361.5 221.5V231.3M362.5 222.5V230.0M363.5 222.3V230.2M364.5 222.0V231.4M365.5 220.3V230.6M366.5 221.6V230.0M367.5 222.8V230.9M368.5 221.0V231.3M369.5 222.7V231.3M370.5 222.7V231.5M371.5 222.0V231.1M372.5 221.3V230.7M373.5 222.0V230.5M374.5 221.1V230.8M375.5 222.3V230.4M376.5 222.8V231.7M377.5 222.3V229.7M378.5 222.3V231.7M379.5 221.6V231.2M380.5 221.1V230.5M381.5 219.1V230.7M382.5 221.2V232.9M383.5 222.8V231.0M384.5 222.6V230.1M385.5 219.9V231.3M386.5 220.2V231.1M387.5 222.6V231.5M388.5 221.0V231.5M389.5 222.7V230.2M390.5 221.4V230.0M391.5 220.7V230.3M392.5 221.8V229.6M393.5 221.7V229.5M394.5 222.0V229.3M395.5 221.5V230.6M396.5 220.6V230.4M397.5 222.1V229.7M398.5 222.4V235.0M399.5 221.0V230.5M400.5 218.8V230.1M401.5 221.6V230.6M402.5 220.9V229.5M403.5 221.1V231.4M404.5 222.5V230.7M405.5 221.2V232.4M406.5 222.0V232.7M407.5 220.0V230.4M408.5 220.9V229.2M409.5 219.0V230.6M410.5 222.4V229.3M411.5 222.4V231.0M412.5 221.8V229.8M413.5 221.9V230.2M414.5 222.4V230.1M415.5 220.8V233.1M416.5 221.3V231.9M417.5 221.9V231.1M418.5 222.5V229.8M419.5 221.2V230.3M420.5 221.2V230.8M421.5 222.4V231.2M422.5 221.3V230.0M423.5 221.0V231.2M424.5 221.6V231.4M425.5 221.6V229.6M426.5 222.3V230.3M427.5 221.4V232.0M428.5 221.8V230.0M429.5 221.1V229.5M430.5 222.1V230.6M431.5 222.6V230.4M432.5 222.0V230.0M433.5 222.9V230.4M434.5 221.0V230.1M435.5 222.0V231.1M436.5 222.5V231.2M437.5 221.2V230.4M438.5 222.1V230.3M439.5 218.2V230.9M440.5 219.9V230.9M441.5 218.4V229.5M442.5 221.1V230.8M443.5 221.2V230.7M444.5 222.4V229.9M445.5 220.7V233.6M446.5 222.2V230.7M447.5 221.1V230.0M448.5 222.3V230.7M449.5 221.1V231.0M450.5 221.1V231.3M451.5 221.9V230.7M452.5 221.6V230.0M453.5 220.2V230.2M454.5 220.8V234.6M455.5 220.5V230.4M456.5 218.5V229.9M457.5 220.8V234.4M458.5 220.4V229.6M459.5 221.4V230.4M460.5 221.4V229.6M461.5 220.8V231.1M462.5 219.7V230.8M463.5 217.9V231.6M464.5 221.6V233.4M465.5 221.5V230.9M466.5 222.1V229.4M467.5 222.0V230.4M468.5 221.5V230.3M469.5 219.1V230.5M470.5 220.7V231.0M471.5 221.6V229.4M472.5 221.1V229.3M473.5 219.2V229.4M474.5 220.7V230.6M475.5 222.2V230.5M476.5 222.5V231.4M477.5 221.8V229.7M478.5 222.0V232.2M479.5 221.7V230.0M480.5 217.2V231.1M481.5 220.8V229.1M482.5 220.6V231.1M483.5 220.9V229.3M484.5 220.4V231.1M485.5 221.2V230.4M486.5 221.9V230.4M487.5 221.8V231.0M488.5 222.3V230.6M489.5 218.2V230.7M490.5 221.8V230.5M491.5 221.1V230.2M492.5 221.6V231.0M493.5 221.4V232.4M494.5 218.6V230.1M495.5 222.7V231.8M496.5 222.5V230.0M497.5 217.6V229.8M498.5 221.5V230.7M499.5 221.9V230.6M500.5 221.3V230.2M501.5 221.2V231.2M502.5 218.9V233.3M503.5 220.7V229.9M504.5 221.9V230.9M505.5 220.8V230.1M506.5 220.6V229.5M507.5 221.9V229.9M508.5 222.4V231.2M509.5 222.2V230.8M510.5 221.6V234.5M511.5 221.4V229.6M512.5 220.4V230.7M513.5 220.5V233.4M514.5 221.6V229.9M515.5 219.0V229.9M516.5 221.0V230.7M517.5 220.4V230.7M518.5 220.8V231.0M519.5 221.9V231.4M520.5 221.4V230.6M521.5 220.2V229.5M522.5 217.6V231.3M523.5 219.7V232.1M524.5 221.4V229.9M525.5 221.3V229.4M526.5 220.7V229.7M527.5 221.9V232.3M528.5 222.0V231.2M529.5 221.3V232.7M530.5 222.2V230.5M531.5 222.2V229.6M532.5 220.8V230.6M533.5 222.4V232.6M534.5 222.2V230.5M535.5 221.3V232.4M536.5 222.0V230.7M537.5 221.2V230.1M538.5 220.3V231.2M539.5 220.6V231.5M540.5 222.0V228.8M541.5 221.0V231.4M542.5 221.6V229.4M543.5 221.7V232.6M544.5 218.9V230.2M545.5 221.4V229.9M546.5 221.2V229.8M547.5 220.5V230.5M548.5 221.6V230.5M549.5 217.7V229.8M550.5 221.7V230.5M551.5 221.1V229.2M552.5 219.9V229.6M553.5 219.3V229.1M554.5 220.8V230.5M555.5 220.6V232.0M556.5 221.2V229.1M557.5 221.9V229.3M558.5 221.0V229.5M559.5 220.4V229.2M560.5 222.2V231.7M561.5 220.3V230.0M562.5 221.7V231.6M563.5 221.0V230.0M564.5 221.3V230.3M565.5 222.3V230.8M566.5 221.8V229.9M567.5 222.1V231.9M568.5 222.0V231.9M569.5 218.8V230.6M570.5 221.6V230.1M571.5 221.2V228.9M572.5 222.0V230.1M573.5 219.4V230.6M574.5 221.9V229.8M575.5 221.0V229.9M576.5 221.0V230.5M577.5 220.7V228.8M578.5 220.7V229.5M579.5 218.8V233.5M580.5 221.0V229.2M581.5 222.0V230.3M582.5 220.2V229.8M583.5 220.7V229.2M584.5 222.0V230.1M585.5 221.7V229.3M586.5 218.5V229.4M587.5 218.9V230.3M588.5 222.6V230.2M589.5 223.0V231.5M590.5 220.9V233.3M591.5 226.7V235.3M592.5 227.6V238.7M593.5 229.4V236.6M594.5 230.5V239.9M595.5 231.7V242.5M596.5 236.7V244.2M597.5 240.0V248.1M598.5 245.5V254.0M599.5 251.7V261.4M600.5 259.3V270.2M601.5 268.1V280.1M602.5 277.9V290.4M603.5 288.5V300.6M604.5 298.6V310.2M605.5 308.2V318.8M606.5 316.7V325.9M607.5 323.5V332.2M608.5 329.5V337.7M609.5 335.0V343.2M610.5 340.6V348.5M611.5 345.0V353.0M612.5 349.7V358.3M613.5 353.2V360.8M614.5 355.6V364.3M615.5 359.3V367.2M616.5 360.5V369.0M617.5 363.1V371.5M618.5 364.7V374.8M619.5 363.3V374.1M620.5 366.8V375.1M621.5 366.1V375.0M622.5 367.5V376.7M623.5 367.2V378.6M624.5 367.8V375.8M625.5 363.8V377.2M626.5 364.9V376.9M627.5 369.4V377.1M628.5 369.3V378.0M629.5 369.7V377.4M630.5 369.0V378.0M631.5 371.1V380.1M632.5 368.1V381.1M633.5 369.6V382.9M634.5 372.2V380.5M635.5 372.0V382.1M636.5 373.4V385.8M637.5 373.1V381.7M638.5 373.2V381.2M639.5 371.5V380.0M640.5 372.0V379.3M641.5 369.6V379.0M642.5 369.5V377.8M643.5 366.5V376.2M644.5 366.6V376.0M645.5 366.3V374.7M646.5 364.8V372.9M647.5 362.6V372.8M648.5 362.2V371.4M649.5 361.7V370.5M650.5 360.8V370.6M651.5 359.9V368.4M652.5 359.2V368.1M653.5 358.5V368.2M654.5 357.7V367.8M655.5 357.5V366.0M656.5 358.3V366.6M657.5 356.9V367.9M658.5 358.4V367.1M659.5 358.0V366.8M660.5 359.0V367.4M661.5 361.0V368.7M662.5 361.3V371.1M663.5 362.3V370.7M664.5 364.1V372.8M665.5 363.7V373.9M666.5 365.6V374.5M667.5 366.5V377.8M668.5 367.6V377.0M669.5 365.9V375.9M670.5 366.8V375.5M671.5 368.6V376.6M672.5 368.1V376.5M673.5 367.1V375.1M674.5 367.1V376.7M675.5 366.6V374.4M676.5 367.0V374.2M677.5 366.7V374.2M678.5 365.0V374.1M679.5 361.6V373.5M680.5 365.2V374.7M681.5 366.6V374.1M682.5 364.7V373.6M683.5 365.1V373.4M684.5 366.3V374.5M685.5 366.3V374.8M686.5 366.1V373.8M687.5 361.1V375.0M688.5 365.9V375.2M689.5 364.9V373.3M690.5 363.6V373.9M691.5 363.0V372.7M692.5 363.4V372.7M693.5 361.3V371.0M694.5 361.6V370.5M695.5 360.8V369.1M696.5 357.2V368.4M697.5 357.9V366.8M698.5 358.6V365.9M699.5 357.8V365.6M700.5 356.4V365.1M701.5 356.0V364.4M702.5 355.9V365.4M703.5 354.8V363.2M704.5 354.5V364.0M705.5 352.3V365.3M706.5 354.5V361.8M707.5 351.4V362.3M708.5 354.3V362.2M709.5 352.1V362.2M710.5 352.8V362.6M711.5 353.8V362.3M712.5 352.3V361.3M713.5 351.8V361.7M714.5 351.7V361.1M715.5 349.6V366.2M716.5 352.8V364.8M717.5 351.5V360.9M718.5 351.2V361.0M719.5 352.5V360.9M720.5 351.7V361.0M721.5 350.8V359.2M722.5 350.6V363.3M723.5 350.5V358.6M724.5 349.6V360.1M725.5 349.1V359.0M726.5 349.9V358.1M727.5 346.7V357.8M728.5 350.4V359.4M729.5 349.1V358.5M730.5 349.6V357.5M731.5 348.7V361.4M732.5 349.5V356.9M733.5 344.8V357.4M734.5 348.2V357.4M735.5 349.1V356.1M736.5 347.6V357.6M737.5 347.8V357.9M738.5 346.0V358.6M739.5 345.9V359.9M740.5 344.4V357.6M741.5 346.7V358.5M742.5 347.5V358.2M743.5 346.4V356.6M744.5 346.2V355.7M745.5 347.5V355.3M746.5 347.3V354.1M747.5 347.0V354.4M748.5 344.9V354.1M749.5 345.9V353.3M750.5 344.6V354.3M751.5 345.9V353.4M752.5 344.3V353.9M753.5 345.1V354.1M754.5 343.5V352.7M755.5 344.6V353.5M756.5 341.5V351.7M757.5 344.6V356.6M758.5 344.2V351.8M759.5 343.6V352.6M760.5 343.0V352.2M761.5 341.7V351.5M762.5 340.8V349.8M763.5 340.7V350.4M764.5 340.3V349.7M765.5 340.7V350.6M766.5 340.0V350.0M767.5 339.9V348.6M768.5 340.7V348.6M769.5 341.0V351.6M770.5 339.7V348.6M771.5 340.5V348.3M772.5 340.1V349.4M773.5 339.0V349.5M774.5 339.7V348.7M775.5 339.6V353.0M776.5 340.3V349.6M777.5 340.4V350.8M778.5 341.4V351.1M779.5 342.1V349.8M780.5 341.4V350.1M781.5 343.1V351.4M782.5 342.3V351.3M783.5 343.8V354.5M784.5 342.7V353.3M785.5 343.7V354.8M786.5 343.6V352.2M787.5 344.4V355.5M788.5 345.4V353.0M789.5 346.1V353.7M790.5 345.3V354.7M791.5 345.9V358.0M792.5 344.2V354.5M793.5 342.7V352.8M794.5 344.3V354.1M795.5 344.8V354.1M796.5 344.6V358.3M797.5 344.1V357.0M798.5 345.7V355.4M799.5 343.9V357.2M800.5 345.5V354.4M801.5 344.7V353.2M802.5 342.0V352.4M803.5 343.8V351.2M804.5 341.2V349.3M805.5 337.5V344.8M806.5 333.0V340.8M807.5 328.2V335.9M808.5 323.3V331.3M809.5 318.2V326.4M810.5 313.5V321.3M811.5 308.5V316.5M812.5 303.4V311.6M813.5 299.9V307.5M814.5 297.7V306.1M815.5 296.6V303.3M816.5 297.2V305.1M817.5 299.8V308.6M818.5 300.6V309.4M819.5 304.2V312.0M820.5 307.5V315.5M821.5 310.1V317.8M822.5 312.9V321.2M823.5 316.8V324.0M824.5 319.7V328.2M825.5 322.3V328.8M826.5 323.1V328.6M827.5 320.0V326.9M828.5 314.3V323.0M829.5 307.2V317.0M830.5 299.6V309.5M831.5 292.7V302.3M832.5 285.3V295.1M833.5 277.4V287.7M834.5 268.5V279.5M835.5 259.0V270.6M836.5 249.8V261.2M837.5 241.5V251.9M838.5 234.6V243.6M839.5 228.4V237.3M840.5 223.6V231.5M841.5 218.8V226.8M842.5 215.3V222.4M843.5 212.1V218.6M844.5 207.8V217.7M845.5 209.0V217.4M846.5 209.4V221.0M847.5 212.9V221.8M848.5 215.0V223.4M849.5 216.6V225.2M850.5 216.6V228.6M851.5 216.1V226.0M852.5 219.0V228.0M853.5 218.0V227.6M854.5 217.5V226.8M855.5 214.4V225.7M856.5 215.3V223.6M857.5 214.8V223.3M858.5 212.7V221.4M859.5 211.5V222.2M860.5 210.6V220.4M861.5 210.9V218.6M862.5 205.4V218.0M863.5 208.9V217.6M864.5 208.0V216.0M865.5 206.9V215.4M866.5 205.4V214.7M867.5 204.1V214.0M868.5 204.4V212.8M869.5 203.0V215.3M870.5 202.7V214.7M871.5 202.7V215.9M872.5 199.6V212.1M873.5 203.6V211.3M874.5 202.2V211.3M875.5 202.2V211.3M876.5 203.5V211.8M877.5 202.5V211.5M878.5 203.1V210.9M879.5 203.6V211.4M880.5 201.7V211.7M881.5 203.6V210.8M882.5 200.4V211.6M883.5 203.1V211.1M884.5 202.1V211.0M885.5 202.7V211.3M886.5 200.7V211.5M887.5 199.9V210.8M888.5 201.3V213.5M889.5 197.8V211.2M890.5 202.5V210.9M891.5 202.4V211.0M892.5 201.8V211.1M893.5 201.2V210.2M894.5 201.5V211.6M895.5 201.3V211.7M896.5 202.4V211.6M897.5 201.1V213.2M898.5 201.3V210.7M899.5 201.3V210.7M900.5 202.4V214.1M901.5 201.8V209.4M902.5 201.8V209.8M903.5 198.0V209.4M904.5 201.4V210.2M905.5 196.8V209.0M906.5 201.2V209.1M907.5 197.1V210.6M908.5 201.7V210.1M909.5 200.7V210.6M910.5 201.1V210.4M911.5 200.8V208.6M912.5 201.7V208.5M913.5 201.2V209.7M914.5 199.8V208.4M915.5 199.6V209.8M916.5 197.3V209.1M917.5 199.4V209.5M918.5 199.9V208.3M919.5 200.6V208.6M920.5 200.2V207.9M921.5 199.8V210.0M922.5 199.0V208.8M923.5 200.6V207.9M924.5 200.3V209.2M925.5 198.6V207.6M926.5 200.4V210.9M927.5 199.4V207.8M928.5 198.4V211.6M929.5 198.5V208.0M930.5 198.8V207.3M931.5 199.6V207.6M932.5 200.1V211.0M933.5 200.4V208.4M934.5 194.8V207.3M935.5 199.4V207.8M936.5 199.5V211.6M937.5 199.7V209.0M938.5 200.7V212.3M939.5 196.2V212.2M940.5 199.5V211.5M941.5 200.3V209.0M942.5 199.2V212.4M943.5 197.7V207.8M944.5 199.7V208.3M945.5 199.1V207.5M946.5 200.0V207.6M947.5 196.9V208.2M948.5 199.8V208.2M949.5 198.2V207.5M950.5 198.9V206.7M951.5 198.9V210.0M952.5 198.4V209.1M953.5 199.8V207.1M954.5 198.4V208.6M955.5 198.1V207.0M956.5 198.7V207.2M957.5 197.5V208.0M958.5 196.8V207.2M959.5 198.3V206.6M960.5 196.3V208.3M961.5 198.5V206.9M962.5 199.1V206.9M963.5 198.8V207.1M964.5 198.2V206.3M965.5 199.3V207.0M966.5 198.2V206.0M967.5 199.0V207.1M968.5 198.1V206.4M969.5 196.8V205.9M970.5 198.7V206.6M971.5 197.3V207.1M972.5 196.6V207.3M973.5 197.7V205.1M974.5 196.9V205.0M975.5 196.8V209.9M976.5 196.3V205.8M977.5 197.9V206.3M978.5 196.3V208.3M979.5 197.9V210.0M980.5 197.0V207.5M981.5 196.7V209.8M982.5 198.1V206.3M983.5 195.9V204.8M984.5 196.9V206.6M985.5 196.9V206.1M986.5 196.9V206.6M987.5 196.7V206.0M988.5 197.0V206.3M989.5 197.8V205.9M990.5 196.8V206.4M991.5 192.0V204.5M992.5 196.7V204.9M993.5 197.5V206.0M994.5 195.7V206.2M995.5 196.9V205.1M996.5 192.3V206.1M997.5 195.1V205.7M998.5 196.6V205.3M999.5 195.9V205.1M1000.5 193.2V207.5M1001.5 195.1V204.5M1002.5 195.3V205.2M1003.5 195.3V205.3M1004.5 195.5V204.1M1005.5 194.7V204.8M1006.5 196.0V205.0M1007.5 194.7V204.2M1008.5 192.2V204.6M1009.5 194.8V203.5M1010.5 194.9V203.7M1011.5 194.1V203.5M1012.5 195.7V205.5M1013.5 194.1V203.9M1014.5 194.5V203.7M1015.5 195.6V203.4M1016.5 194.3V204.1M1017.5 194.6V202.5M1018.5 190.7V203.1M1019.5 194.8V203.4M1020.5 193.4V203.1M1021.5 194.2V203.1M1022.5 193.9V203.9M1023.5 193.8V202.2M1024.5 191.0V203.7M1025.5 193.6V203.2M1026.5 193.6V202.5M1027.5 192.6V204.4M1028.5 193.7V205.4M1029.5 193.5V203.2M1030.5 193.7V202.2M1031.5 194.5V202.8M1032.5 194.5V203.5M1033.5 193.6V202.7M1034.5 194.3V201.7M1035.5 195.0V201.9M1036.5 192.8V202.7M1037.5 193.2V202.4M1038.5 193.5V201.4M1039.5 194.3V203.3M1040.5 194.4V202.6M1041.5 190.1V201.5M1042.5 192.5V202.8M1043.5 193.5V202.9M1044.5 194.3V201.9M1045.5 193.6V202.9M1046.5 194.6V202.9M1047.5 189.2V203.3M1048.5 193.9V202.3M1049.5 192.5V204.7M1050.5 192.6V203.9M1051.5 193.1V203.4M1052.5 193.1V204.0M1053.5 193.7V202.9M1054.5 193.5V203.2M1055.5 193.4V206.1M1056.5 190.4V202.0M1057.5 191.0V203.3M1058.5 193.6V202.3M1059.5 192.9V201.7M1060.5 193.6V202.7M1061.5 194.5V201.7M1062.5 193.3V202.8M1063.5 194.5V203.6M1064.5 194.4V203.0M1065.5 194.2V205.1M1066.5 194.0V203.3M1067.5 194.8V203.7M1068.5 194.2V203.8M1069.5 194.2V205.5M1070.5 193.3V203.9M1071.5 193.4V202.8M1072.5 195.0V204.4M1073.5 191.7V203.3M1074.5 194.2V203.0M1075.5 193.7V207.2M1076.5 194.5V203.7M1077.5 194.8V203.8M1078.5 194.5V204.3M1079.5 195.3V204.4M1080.5 195.3V204.5M1081.5 195.5V204.9M1082.5 192.8V204.8M1083.5 196.0V203.2M1084.5 193.4V206.1M1085.5 194.3V206.8M1086.5 193.3V204.8M1087.5 194.7V204.0M1088.5 191.3V205.1M1089.5 195.4V203.9M1090.5 195.3V204.1M1091.5 196.0V205.3M1092.5 195.4V203.9M1093.5 195.4V204.3M1094.5 196.5V204.5M1095.5 195.8V204.9M1096.5 195.6V208.6M1097.5 195.7V203.9M1098.5 192.4V208.5M1099.5 195.5V205.4M1100.5 192.4V203.6M1101.5 195.3V204.2M1102.5 196.7V204.7M1103.5 195.3V205.3M1104.5 195.8V204.6M1105.5 196.6V204.3M1106.5 194.6V205.5M1107.5 194.9V204.4M1108.5 193.2V206.3M1109.5 197.8V205.9M1110.5 193.5V206.4M1111.5 197.8V206.4M1112.5 196.4V208.0M1113.5 196.6V206.1M1114.5 197.0V205.1M1115.5 197.3V209.2M1116.5 196.0V210.0M1117.5 198.2V205.4M1118.5 194.2V207.4M1119.5 193.8V207.0M1120.5 197.0V207.8M1121.5 197.2V206.4M1122.5 198.0V206.9M1123.5 197.4V206.1M1124.5 198.7V205.9M1125.5 199.0V206.9M1126.5 199.2V207.1M1127.5 198.5V208.4M1128.5 197.4V206.5M1129.5 194.7V206.9M1130.5 193.5V210.5M1131.5 198.3V206.1M1132.5 199.1V207.8M1133.5 197.5V209.9M1134.5 197.4V206.7M1135.5 198.2V206.7M1136.5 198.2V207.7M1137.5 198.3V207.4M1138.5 196.0V207.7M1139.5 197.1V206.9M1140.5 198.7V207.3M1141.5 198.5V206.3M1142.5 198.5V206.0M1143.5 199.0V208.7M1144.5 198.8V210.3M1145.5 198.0V207.8M1146.5 198.5V207.6M1147.5 198.3V206.6M1148.5 198.5V206.7M1149.5 197.5V207.4M1150.5 199.4V207.8M1151.5 197.9V206.3M1152.5 197.7V207.5M1153.5 198.5V208.0M1154.5 194.3V209.2M1155.5 198.9V206.4M1156.5 195.4V207.8M1157.5 196.6V210.3M1158.5 198.7V206.7M1159.5 197.5V209.7M1160.5 198.4V206.9M1161.5 199.3V208.3M1162.5 198.2V207.7M1163.5 197.9V206.3M1164.5 198.3V206.8M1165.5 195.0V210.0M1166.5 198.7V207.3M1167.5 197.7V207.5M1168.5 199.3V207.1M1169.5 195.6V208.5M1170.5 195.6V206.6M1171.5 195.3V206.5M1172.5 197.1V206.7M1173.5 199.6V208.8M1174.5 199.3V207.5M1175.5 199.8V208.6M1176.5 198.6V208.0M1177.5 199.7V207.7M1178.5 199.1V209.0M1179.5 200.5V207.4M1180.5 199.3V208.2M1181.5 195.2V207.1M1182.5 198.1V208.8M1183.5 199.0V208.3M1184.5 195.8V208.6M1185.5 200.3V210.7M1186.5 199.2V208.2M1187.5 198.6V207.3M1188.5 199.9V208.3M1189.5 198.6V211.2M1190.5 199.0V208.3M1191.5 198.4V207.7M1192.5 198.0V208.3M1193.5 199.7V209.4M1194.5 200.6V207.6M1195.5 200.4V208.9M1196.5 199.8V208.3M1197.5 198.7V209.1M1198.5 198.8V208.7M1199.5 198.1V207.4M1200.5 199.5V207.3M1201.5 198.4V210.6M1202.5 200.2V208.1M1203.5 199.9V207.1M1204.5 200.4V208.7M1205.5 198.8V208.6M1206.5 200.1V208.7M1207.5 198.7V211.9M1208.5 199.4V208.4M1209.5 198.3V210.3M1210.5 199.0V207.0M1211.5 199.9V207.2M1212.5 197.1V208.1M1213.5 198.5V211.9M1214.5 198.7V207.5M1215.5 199.2V209.7M1216.5 200.1V207.9M1217.5 198.1V207.0M1218.5 198.9V208.4M1219.5 199.4V206.9M1220.5 198.7V208.5M1221.5 199.1V207.6M1222.5 199.6V210.2M1223.5 200.4V208.7M1224.5 198.9V207.9M1225.5 200.4V209.0M1226.5 200.0V208.7M1227.5 198.6V208.5M1228.5 199.4V208.7M1229.5 200.2V208.7M1230.5 197.5V208.2M1231.5 199.4V208.7M1232.5 199.7V208.1M1233.5 199.9V209.1M1234.5 199.8V213.4M1235.5 200.5V209.3M1236.5 200.0V207.8M1237.5 199.9V207.7M1238.5 199.4V208.7M1239.5 198.9V207.3M1240.5 198.7V207.2M1241.5 194.7V207.8M1242.5 199.3V207.1M1243.5 198.7V208.5M1244.5 199.8V207.8M1245.5 197.9V208.5M1246.5 198.4V207.6M1247.5 199.8V207.9M1248.5 199.8V207.4M1249.5 197.9V208.3M1250.5 198.5V208.5M1251.5 198.6V208.2M1252.5 199.5V207.8M1253.5 198.1V206.4M1254.5 198.1V207.2M1255.5 195.2V207.5M1256.5 197.7V206.2M1257.5 197.6V207.2M1258.5 198.6V207.0M1259.5 198.1V207.3M1260.5 198.1V207.3M1261.5 195.7V206.1M1262.5 198.4V207.2M1263.5 197.3V207.9M1264.5 194.6V207.0M1265.5 198.8V207.4M1266.5 199.1V206.2M1267.5 197.5V206.1M1268.5 199.3V207.4M1269.5 198.6V208.2M1270.5 199.2V208.6M1271.5 199.3V207.3M1272.5 197.5V207.3M1273.5 198.1V207.5M1274.5 198.6V207.3M1275.5 194.8V209.0M1276.5 199.4V208.6M1277.5 197.9V207.9M1278.5 197.0V207.2M1279.5 199.0V209.4M1280.5 199.3V208.0M1281.5 199.1V208.6M1282.5 195.0V210.6M1283.5 199.6V208.5M1284.5 200.0V207.5M1285.5 198.3V208.5M1286.5 199.0V207.7M1287.5 198.1V208.4M1288.5 198.3V206.5M1289.5 198.6V207.3M1290.5 197.9V208.2M1291.5 197.8V206.7M1292.5 197.6V209.7M1293.5 195.1V207.9" stroke="#ff8200" stroke-width="1.1" fill="none"/>
<path d="M95.5 222.7V229.5M96.5 221.9V229.7M97.5 221.2V231.4M98.5 221.5V230.5M99.5 221.1V229.8M100.5 220.3V230.0M101.5 221.9V229.2M102.5 221.9V228.8M103.5 222.7V230.8M104.5 218.8V229.3M105.5 221.9V230.6M106.5 222.0V230.6M107.5 222.7V229.9M108.5 222.2V230.3M109.5 221.7V230.0M110.5 222.7V228.9M111.5 221.4V229.2M112.5 221.9V230.5M113.5 222.2V230.0M114.5 222.5V229.3M115.5 221.7V228.9M116.5 219.1V228.9M117.5 222.5V229.3M118.5 221.9V230.1M119.5 222.4V229.4M120.5 221.2V230.2M121.5 222.5V229.8M122.5 221.8V233.4M123.5 221.7V233.7M124.5 221.5V228.5M125.5 221.6V228.2M126.5 221.9V228.4M127.5 222.1V230.9M128.5 221.6V229.4M129.5 221.3V228.9M130.5 221.7V233.2M131.5 221.5V232.0M132.5 221.5V228.6M133.5 220.6V229.9M134.5 218.6V229.7M135.5 220.9V231.7M136.5 222.1V230.1M137.5 221.5V230.1M138.5 222.4V229.9M139.5 221.3V229.6M140.5 221.6V230.3M141.5 219.3V229.0M142.5 222.4V229.4M143.5 221.1V228.8M144.5 221.6V229.8M145.5 222.8V230.2M146.5 221.5V229.8M147.5 219.2V229.6M148.5 221.2V229.1M149.5 222.3V231.1M150.5 221.8V230.5M151.5 222.3V230.1M152.5 221.3V230.3M153.5 222.0V229.9M154.5 218.8V229.7M155.5 222.7V229.1M156.5 221.2V229.9M157.5 222.4V229.1M158.5 221.5V230.6M159.5 222.7V229.9M160.5 219.8V230.3M161.5 220.5V230.4M162.5 221.6V231.4M163.5 221.6V230.1M164.5 222.6V230.1M165.5 223.1V230.8M166.5 222.9V230.2M167.5 223.3V229.5M168.5 219.4V234.9M169.5 219.8V233.0M170.5 222.4V230.9M171.5 222.0V229.9M172.5 223.2V233.1M173.5 221.4V230.5M174.5 222.8V230.0M175.5 221.6V230.8M176.5 220.5V230.4M177.5 222.3V229.8M178.5 221.9V230.4M179.5 219.4V229.3M180.5 220.3V230.3M181.5 223.1V230.4M182.5 219.2V230.5M183.5 222.9V229.1M184.5 223.1V229.3M185.5 222.1V230.7M186.5 219.0V230.2M187.5 222.3V230.9M188.5 221.3V230.7M189.5 222.4V230.0M190.5 221.4V230.3M191.5 222.6V230.7M192.5 222.5V230.0M193.5 219.1V232.7M194.5 222.8V229.2M195.5 222.0V229.9M196.5 223.2V230.7M197.5 222.5V230.1M198.5 222.2V230.8M199.5 221.9V231.2M200.5 223.2V230.0M201.5 222.4V231.0M202.5 223.0V231.8M203.5 222.9V230.4M204.5 223.5V230.5M205.5 226.0V232.0M206.5 229.2V238.6M207.5 236.8V252.6M208.5 250.9V274.1M209.5 272.4V300.0M210.5 298.3V325.0M211.5 323.3V344.0M212.5 342.3V354.9M213.5 352.6V360.0M214.5 356.6V363.8M215.5 357.6V367.5M216.5 358.8V366.2M217.5 360.4V367.8M218.5 361.3V369.1M219.5 361.9V370.3M220.5 362.3V370.7M221.5 362.7V371.8M222.5 364.7V372.2M223.5 365.5V375.9M224.5 366.9V374.7M225.5 368.5V375.7M226.5 367.8V376.0M227.5 368.8V375.5M228.5 367.4V376.5M229.5 368.4V376.1M230.5 365.3V377.7M231.5 364.6V376.0M232.5 368.2V375.4M233.5 367.4V374.8M234.5 368.7V376.7M235.5 369.8V377.8M236.5 372.1V379.8M237.5 374.2V381.4M238.5 375.3V383.2M239.5 377.4V387.6M240.5 379.0V387.6M241.5 380.5V389.3M242.5 383.2V389.9M243.5 384.2V391.3M244.5 385.3V392.6M245.5 384.6V395.3M246.5 382.1V390.7M247.5 381.0V390.3M248.5 380.0V388.2M249.5 377.8V386.6M250.5 374.7V385.9M251.5 377.0V384.6M252.5 376.5V384.0M253.5 377.7V384.8M254.5 374.9V385.1M255.5 377.7V385.1M256.5 376.7V385.2M257.5 377.3V384.2M258.5 376.3V384.5M259.5 376.5V384.1M260.5 372.9V385.3M261.5 377.7V388.3M262.5 377.3V385.5M263.5 377.6V384.4M264.5 376.5V384.3M265.5 374.9V384.8M266.5 377.6V385.7M267.5 376.4V385.1M268.5 376.7V385.6M269.5 377.2V384.3M270.5 376.9V385.0M271.5 378.0V386.1M272.5 378.2V385.6M273.5 378.0V385.6M274.5 377.8V385.1M275.5 376.9V387.6M276.5 377.5V384.5M277.5 377.7V384.6M278.5 377.7V385.8M279.5 378.0V384.2M280.5 377.4V384.6M281.5 377.4V385.9M282.5 377.0V384.4M283.5 377.9V385.7M284.5 376.7V385.5M285.5 377.3V384.9M286.5 375.7V384.2M287.5 376.3V383.9M288.5 375.7V384.9M289.5 378.0V384.7M290.5 377.1V385.7M291.5 376.9V384.5M292.5 376.6V384.5M293.5 376.5V385.0M294.5 376.7V384.2M295.5 377.7V388.8M296.5 378.2V384.4M297.5 378.0V385.4M298.5 377.2V384.8M299.5 377.8V386.7M300.5 377.4V385.0M301.5 377.6V385.8M302.5 377.3V385.8M303.5 376.9V388.5M304.5 377.3V385.2M305.5 376.2V385.8M306.5 377.9V385.8M307.5 378.2V386.1M308.5 377.4V384.8M309.5 373.0V386.0M310.5 377.2V387.4M311.5 377.6V387.3M312.5 377.1V384.9M313.5 377.9V387.2M314.5 377.1V385.9M315.5 377.6V384.2M316.5 377.4V385.2M317.5 377.3V384.9M318.5 375.9V389.3M319.5 378.3V384.4M320.5 377.3V388.1M321.5 378.3V384.5M322.5 377.8V386.9M323.5 377.6V385.1M324.5 376.9V385.1M325.5 378.1V385.6M326.5 377.3V384.5M327.5 377.3V384.1M328.5 377.0V384.2M329.5 375.4V384.7M330.5 375.9V384.3M331.5 376.9V389.1M332.5 377.2V384.0M333.5 373.1V384.4M334.5 376.5V385.5M335.5 377.5V388.0M336.5 377.8V386.3M337.5 378.2V385.0M338.5 377.0V384.6M339.5 374.1V385.8M340.5 378.1V385.3M341.5 378.1V385.3M342.5 378.5V384.9M343.5 377.4V385.2M344.5 378.4V384.6M345.5 378.7V386.3M346.5 376.8V385.8M347.5 378.1V387.0M348.5 378.3V385.6M349.5 377.5V385.1M350.5 378.2V385.1M351.5 377.5V386.6M352.5 377.4V385.1M353.5 376.1V385.8M354.5 378.4V386.1M355.5 378.0V386.0M356.5 378.9V386.4M357.5 377.6V386.4M358.5 375.6V385.8M359.5 378.4V387.4M360.5 377.4V386.1M361.5 378.2V389.1M362.5 376.6V389.0M363.5 377.7V385.2M364.5 377.8V384.9M365.5 374.0V385.3M366.5 377.0V384.8M367.5 377.7V387.9M368.5 377.0V384.7M369.5 378.0V385.1M370.5 373.8V385.9M371.5 378.7V385.8M372.5 378.4V386.1M373.5 378.4V384.9M374.5 377.6V385.2M375.5 377.4V385.5M376.5 377.5V386.0M377.5 378.4V384.6M378.5 376.7V385.4M379.5 377.4V385.8M380.5 377.3V385.7M381.5 377.8V386.1M382.5 378.6V385.7M383.5 377.7V387.3M384.5 377.6V388.3M385.5 378.2V386.4M386.5 378.6V385.7M387.5 379.0V386.5M388.5 375.0V390.9M389.5 378.0V385.5M390.5 375.6V389.3M391.5 375.4V387.3M392.5 379.6V386.0M393.5 379.5V387.0M394.5 378.4V387.2M395.5 378.4V386.0M396.5 379.4V386.5M397.5 378.4V387.3M398.5 378.3V387.5M399.5 375.7V387.5M400.5 377.5V386.9M401.5 379.6V386.8M402.5 378.6V386.6M403.5 375.4V386.9M404.5 378.5V386.7M405.5 379.1V386.5M406.5 379.0V385.8M407.5 377.8V386.7M408.5 378.4V386.4M409.5 378.1V386.6M410.5 377.4V388.3M411.5 378.1V385.5M412.5 379.0V385.6M413.5 377.9V385.7M414.5 376.0V385.6M415.5 378.2V385.0M416.5 378.3V386.1M417.5 378.5V385.4M418.5 378.1V387.9M419.5 377.4V385.7M420.5 377.7V387.0M421.5 378.6V389.1M422.5 377.5V385.5M423.5 378.3V385.2M424.5 378.5V385.5M425.5 377.7V385.7M426.5 378.1V385.5M427.5 376.7V385.4M428.5 378.0V390.3M429.5 378.1V390.8M430.5 377.9V386.4M431.5 377.9V386.9M432.5 378.7V386.6M433.5 378.4V387.4M434.5 377.9V385.3M435.5 374.0V386.1M436.5 379.1V386.0M437.5 378.1V385.8M438.5 379.4V387.8M439.5 379.6V387.6M440.5 378.4V387.6M441.5 378.7V387.2M442.5 379.8V386.5M443.5 378.7V387.1M444.5 378.8V387.4M445.5 379.2V386.9M446.5 379.6V391.3M447.5 378.9V387.6M448.5 375.6V386.1M449.5 375.5V386.3M450.5 379.0V387.0M451.5 378.5V387.5M452.5 378.8V387.5M453.5 379.0V386.8M454.5 379.3V387.7M455.5 378.8V387.2M456.5 379.6V387.1M457.5 378.5V386.2M458.5 378.3V386.6M459.5 378.4V386.9M460.5 377.6V386.7M461.5 379.0V387.0M462.5 375.8V386.5M463.5 378.1V385.8M464.5 377.9V386.3M465.5 379.0V386.1M466.5 376.8V385.6M467.5 378.9V386.0M468.5 377.7V386.2M469.5 373.6V386.5M470.5 376.3V385.7M471.5 377.2V387.0M472.5 374.4V386.7M473.5 379.1V386.0M474.5 376.2V385.8M475.5 378.8V389.5M476.5 379.8V386.9M477.5 378.6V387.5M478.5 379.8V386.3M479.5 379.0V387.7M480.5 379.0V388.2M481.5 379.5V386.6M482.5 379.3V390.5M483.5 379.5V387.2M484.5 379.2V386.6M485.5 380.2V388.1M486.5 380.4V386.5M487.5 380.1V391.2M488.5 379.9V386.6M489.5 378.7V390.6M490.5 379.2V387.2M491.5 379.5V390.0M492.5 378.4V389.0M493.5 378.4V386.8M494.5 379.9V387.4M495.5 378.4V386.8M496.5 375.1V388.5M497.5 378.3V386.4M498.5 378.0V385.9M499.5 378.4V386.7M500.5 379.4V387.2M501.5 379.7V386.5M502.5 378.7V391.4M503.5 379.5V388.6M504.5 378.4V390.5M505.5 378.6V385.5M506.5 378.5V386.6M507.5 378.5V385.8M508.5 378.1V387.3M509.5 374.9V386.3M510.5 378.2V387.3M511.5 378.4V386.1M512.5 378.8V385.5M513.5 379.6V386.8M514.5 376.0V386.3M515.5 379.5V386.6M516.5 378.4V386.8M517.5 379.1V385.7M518.5 378.7V386.1M519.5 374.6V389.3M520.5 379.1V386.6M521.5 378.3V387.2M522.5 378.0V386.2M523.5 378.6V390.4M524.5 378.3V385.8M525.5 378.2V386.8M526.5 378.7V386.4M527.5 379.9V386.0M528.5 379.1V387.6M529.5 380.1V387.8M530.5 379.0V386.8M531.5 379.2V387.3M532.5 380.1V387.2M533.5 378.9V387.1M534.5 378.7V387.1M535.5 377.1V388.0M536.5 379.4V386.5M537.5 375.9V387.2M538.5 377.4V389.4M539.5 379.0V387.3M540.5 379.4V387.6M541.5 380.0V387.6M542.5 380.0V390.5M543.5 380.8V387.2M544.5 380.0V387.1M545.5 380.8V388.4M546.5 379.7V387.7M547.5 380.6V387.1M548.5 377.9V387.6M549.5 380.5V388.1M550.5 380.6V388.0M551.5 377.7V387.8M552.5 380.5V391.0M553.5 379.8V387.0M554.5 376.1V387.4M555.5 379.6V389.6M556.5 379.6V387.2M557.5 380.4V387.7M558.5 379.5V391.5M559.5 379.2V386.4M560.5 378.9V386.8M561.5 380.3V387.5M562.5 380.2V391.8M563.5 379.6V388.5M564.5 380.1V386.9M565.5 376.4V388.2M566.5 380.4V388.5M567.5 379.5V387.8M568.5 380.0V389.9M569.5 379.0V388.2M570.5 379.9V387.8M571.5 379.3V387.0M572.5 380.3V387.7M573.5 380.0V387.5M574.5 380.8V391.0M575.5 380.0V387.8M576.5 380.9V388.6M577.5 379.6V388.0M578.5 381.1V388.2M579.5 380.1V389.0M580.5 378.2V391.5M581.5 380.0V387.7M582.5 380.1V388.8M583.5 380.1V387.2M584.5 379.3V390.2M585.5 380.5V387.9M586.5 380.4V386.9M587.5 379.2V386.9M588.5 379.3V388.1M589.5 376.9V389.1M590.5 379.5V388.3M591.5 380.9V387.8M592.5 381.0V388.6M593.5 380.5V387.4M594.5 378.1V387.7M595.5 379.8V390.4M596.5 380.7V388.4M597.5 381.7V388.3M598.5 382.8V390.2M599.5 384.8V393.3M600.5 387.0V394.6M601.5 390.4V397.5M602.5 393.6V400.6M603.5 396.1V404.5M604.5 400.9V408.5M605.5 405.4V412.8M606.5 409.6V416.9M607.5 413.5V420.5M608.5 416.2V423.6M609.5 420.0V426.0M610.5 421.3V429.1M611.5 423.5V432.3M612.5 425.3V432.7M613.5 425.0V434.5M614.5 429.3V437.2M615.5 429.9V437.2M616.5 430.7V438.6M617.5 431.4V439.3M618.5 432.1V441.0M619.5 432.8V441.4M620.5 433.1V442.2M621.5 432.9V441.8M622.5 435.4V442.9M623.5 435.0V443.9M624.5 436.7V444.5M625.5 436.4V443.5M626.5 435.5V444.0M627.5 435.7V444.4M628.5 433.8V445.0M629.5 434.7V444.8M630.5 436.0V443.2M631.5 435.1V442.3M632.5 434.0V443.0M633.5 434.1V442.5M634.5 433.6V441.6M635.5 430.9V442.1M636.5 434.4V443.2M637.5 429.7V440.4M638.5 432.3V440.6M639.5 429.9V440.6M640.5 432.0V440.9M641.5 432.0V440.3M642.5 431.0V439.2M643.5 428.0V439.8M644.5 430.7V439.0M645.5 431.4V438.0M646.5 430.0V438.7M647.5 429.1V437.8M648.5 428.7V437.4M649.5 429.2V439.3M650.5 428.2V436.1M651.5 427.0V435.7M652.5 425.8V434.3M653.5 425.3V433.1M654.5 426.2V433.1M655.5 425.3V433.0M656.5 426.6V433.4M657.5 423.9V434.4M658.5 427.1V436.1M659.5 429.0V439.3M660.5 429.5V436.3M661.5 429.5V436.3M662.5 429.1V437.2M663.5 429.4V436.4M664.5 429.4V439.5M665.5 429.7V436.7M666.5 427.2V436.0M667.5 428.0V436.7M668.5 427.6V435.5M669.5 427.6V438.0M670.5 425.2V436.0M671.5 427.4V435.0M672.5 427.1V435.1M673.5 427.9V436.2M674.5 427.5V435.6M675.5 428.5V435.8M676.5 427.5V435.0M677.5 423.9V435.1M678.5 427.9V435.4M679.5 425.0V435.4M680.5 426.5V435.0M681.5 426.7V434.5M682.5 426.3V435.9M683.5 426.9V434.2M684.5 425.4V433.3M685.5 425.7V434.0M686.5 426.5V436.4M687.5 425.4V433.9M688.5 426.2V432.7M689.5 425.9V432.2M690.5 423.3V434.9M691.5 425.0V432.6M692.5 424.6V432.6M693.5 424.9V432.2M694.5 423.5V432.3M695.5 423.7V431.4M696.5 424.4V433.2M697.5 423.1V431.9M698.5 422.6V431.7M699.5 423.9V430.6M700.5 422.1V430.9M701.5 423.2V431.1M702.5 421.7V429.3M703.5 423.1V430.8M704.5 422.5V433.5M705.5 422.0V430.4M706.5 421.2V429.3M707.5 422.1V429.9M708.5 421.6V428.7M709.5 421.0V428.8M710.5 420.8V428.1M711.5 420.2V429.2M712.5 419.7V431.9M713.5 420.4V428.1M714.5 419.9V427.4M715.5 420.1V428.5M716.5 420.4V426.9M717.5 418.9V426.4M718.5 418.4V426.0M719.5 417.8V427.4M720.5 417.6V425.5M721.5 417.6V426.2M722.5 416.6V425.4M723.5 417.3V425.2M724.5 417.8V424.7M725.5 417.4V424.8M726.5 416.6V424.9M727.5 416.2V425.3M728.5 413.7V425.2M729.5 413.1V425.0M730.5 414.4V424.6M731.5 416.1V424.4M732.5 416.2V424.1M733.5 415.0V423.4M734.5 415.0V422.6M735.5 414.4V423.8M736.5 412.2V423.2M737.5 414.9V422.7M738.5 414.5V422.5M739.5 415.0V422.6M740.5 413.9V422.0M741.5 414.2V421.7M742.5 414.4V423.9M743.5 413.9V422.5M744.5 414.1V421.3M745.5 412.5V421.3M746.5 414.5V420.9M747.5 414.0V421.6M748.5 414.0V421.0M749.5 413.5V421.5M750.5 412.7V420.5M751.5 412.4V421.8M752.5 412.3V421.2M753.5 413.0V421.0M754.5 413.5V420.7M755.5 413.0V424.2M756.5 412.9V419.8M757.5 413.0V421.6M758.5 411.7V420.4M759.5 412.1V419.9M760.5 411.5V423.5M761.5 410.9V418.7M762.5 411.2V418.7M763.5 411.9V419.2M764.5 411.8V419.1M765.5 406.8V418.8M766.5 406.8V419.1M767.5 410.8V419.4M768.5 406.3V421.3M769.5 411.3V419.4M770.5 410.7V418.8M771.5 410.2V418.0M772.5 411.4V418.6M773.5 411.1V417.8M774.5 410.5V418.9M775.5 406.9V420.1M776.5 410.3V421.1M777.5 410.6V417.4M778.5 409.7V417.2M779.5 410.6V417.2M780.5 406.2V420.0M781.5 407.1V416.6M782.5 405.0V418.0M783.5 409.2V417.1M784.5 409.1V418.4M785.5 407.9V416.2M786.5 408.2V418.2M787.5 408.2V415.1M788.5 406.6V416.5M789.5 407.6V418.7M790.5 407.3V417.4M791.5 406.6V416.0M792.5 407.8V414.7M793.5 407.1V415.5M794.5 406.1V414.4M795.5 406.7V415.2M796.5 407.2V414.2M797.5 409.4V415.7M798.5 412.3V419.7M799.5 417.3V425.9M800.5 423.7V432.9M801.5 430.3V439.5M802.5 437.1V444.5M803.5 441.1V445.9M804.5 437.9V445.1M805.5 427.2V439.8M806.5 411.3V429.0M807.5 389.4V413.0M808.5 361.5V391.1M809.5 329.9V363.1M810.5 299.4V331.6M811.5 274.7V301.0M812.5 258.1V276.4M813.5 247.8V259.8M814.5 240.9V249.8M815.5 235.4V243.8M816.5 231.8V238.4M817.5 228.8V235.4M818.5 226.4V236.4M819.5 224.6V233.5M820.5 225.5V232.5M821.5 224.7V232.6M822.5 225.6V232.9M823.5 225.2V233.4M824.5 222.3V233.0M825.5 225.0V233.2M826.5 224.2V232.7M827.5 225.5V232.9M828.5 223.7V232.3M829.5 224.2V232.5M830.5 222.9V232.3M831.5 223.8V232.3M832.5 224.3V233.1M833.5 225.6V232.6M834.5 225.6V233.2M835.5 225.2V232.4M836.5 225.3V236.4M837.5 224.3V234.2M838.5 223.6V231.4M839.5 224.7V232.5M840.5 223.7V232.7M841.5 224.8V231.4M842.5 224.5V236.2M843.5 223.0V233.3M844.5 223.3V235.3M845.5 224.4V232.3M846.5 223.4V232.4M847.5 223.5V231.3M848.5 223.6V232.5M849.5 220.2V232.4M850.5 223.5V232.9M851.5 224.3V230.6M852.5 219.4V232.1M853.5 223.3V231.1M854.5 223.1V231.5M855.5 223.9V230.9M856.5 222.9V230.6M857.5 224.2V231.4M858.5 223.3V232.4M859.5 223.8V232.3M860.5 223.3V232.1M861.5 224.6V232.0M862.5 223.2V231.6M863.5 223.6V232.2M864.5 223.6V231.1M865.5 222.4V232.1M866.5 223.5V231.4M867.5 223.0V234.3M868.5 220.9V231.3M869.5 223.6V230.8M870.5 223.4V233.7M871.5 224.6V231.4M872.5 224.6V230.6M873.5 224.4V231.6M874.5 224.5V230.9M875.5 223.9V231.2M876.5 221.9V230.6M877.5 222.7V231.2M878.5 222.8V231.5M879.5 222.6V230.4M880.5 221.5V233.1M881.5 223.3V234.7M882.5 223.8V231.0M883.5 223.1V230.8M884.5 223.9V230.7M885.5 219.2V232.2M886.5 223.1V231.2M887.5 222.6V233.4M888.5 222.8V234.2M889.5 221.9V235.9M890.5 219.6V230.4M891.5 223.4V231.4M892.5 223.8V234.4M893.5 223.6V230.4M894.5 222.3V230.7M895.5 223.2V231.4M896.5 219.2V231.5M897.5 222.9V233.6M898.5 222.3V231.7M899.5 222.4V230.8M900.5 223.4V231.3M901.5 222.8V231.9M902.5 222.5V231.2M903.5 220.3V235.2M904.5 223.3V231.9M905.5 223.2V231.6M906.5 222.2V230.9M907.5 223.0V232.4M908.5 222.8V232.3M909.5 224.2V232.6M910.5 221.6V231.7M911.5 223.5V232.7M912.5 223.8V232.6M913.5 225.0V231.5M914.5 224.4V236.0M915.5 224.4V232.5M916.5 224.5V232.8M917.5 223.9V232.6M918.5 223.9V232.3M919.5 224.3V233.2M920.5 224.9V232.1M921.5 224.5V231.9M922.5 224.6V232.6M923.5 224.9V232.5M924.5 224.8V231.9M925.5 224.9V236.3M926.5 225.9V232.2M927.5 225.2V236.4M928.5 225.6V232.9M929.5 225.5V233.5M930.5 223.7V232.9M931.5 225.5V232.8M932.5 226.1V233.8M933.5 226.2V233.2M934.5 223.5V233.0M935.5 226.9V233.3M936.5 225.6V233.4M937.5 226.2V233.7M938.5 227.3V234.7M939.5 226.8V234.9M940.5 227.8V235.6M941.5 226.9V235.0M942.5 227.9V235.0M943.5 228.3V235.7M944.5 225.1V235.5M945.5 228.0V236.8M946.5 228.9V235.9M947.5 229.8V236.3M948.5 228.4V236.9M949.5 229.4V237.0M950.5 229.1V237.1M951.5 229.7V240.6M952.5 230.1V238.1M953.5 230.3V239.0M954.5 230.8V238.6M955.5 231.1V238.8M956.5 232.3V239.5M957.5 231.9V239.7M958.5 232.3V240.4M959.5 229.1V240.2M960.5 232.7V244.2M961.5 233.7V241.6M962.5 233.8V241.1M963.5 231.0V241.0M964.5 233.7V242.2M965.5 235.2V242.7M966.5 234.4V243.0M967.5 235.0V242.8M968.5 234.1V242.8M969.5 235.5V242.5M970.5 234.3V243.1M971.5 235.6V242.3M972.5 235.1V242.7M973.5 235.5V243.6M974.5 232.5V242.1M975.5 233.4V242.4M976.5 236.3V242.8M977.5 235.1V242.8M978.5 234.9V244.1M979.5 235.7V243.4M980.5 236.5V243.3M981.5 237.2V244.0M982.5 236.4V244.4M983.5 236.6V244.9M984.5 235.7V247.0M985.5 236.5V246.6M986.5 237.4V245.7M987.5 237.9V244.5M988.5 236.9V244.9M989.5 236.7V250.0M990.5 236.7V244.6M991.5 238.2V245.5M992.5 237.6V246.3M993.5 238.4V245.4M994.5 234.7V248.4M995.5 236.3V245.5M996.5 238.7V247.1M997.5 238.1V247.0M998.5 238.7V245.8M999.5 239.8V246.0M1000.5 239.2V246.3M1001.5 238.2V246.0M1002.5 238.3V246.4M1003.5 238.0V248.7M1004.5 238.6V247.0M1005.5 235.7V245.6M1006.5 239.0V246.8M1007.5 238.5V246.6M1008.5 234.9V246.9M1009.5 238.6V246.6M1010.5 238.2V250.5M1011.5 238.0V245.7M1012.5 239.0V247.2M1013.5 239.0V250.7M1014.5 238.9V246.5M1015.5 239.6V246.4M1016.5 238.1V251.0M1017.5 238.2V246.5M1018.5 238.3V246.9M1019.5 238.8V247.1M1020.5 239.2V247.0M1021.5 238.8V247.5M1022.5 237.8V245.2M1023.5 237.9V245.7M1024.5 237.8V245.2M1025.5 237.9V245.3M1026.5 237.4V245.2M1027.5 234.3V245.8M1028.5 237.7V246.8M1029.5 233.4V247.5M1030.5 235.8V245.6M1031.5 237.7V247.8M1032.5 236.2V244.7M1033.5 236.8V244.3M1034.5 235.0V244.9M1035.5 235.2V243.3M1036.5 235.9V243.5M1037.5 235.1V244.0M1038.5 232.5V242.3M1039.5 235.4V243.2M1040.5 234.4V245.8M1041.5 233.9V242.2M1042.5 233.9V241.8M1043.5 234.0V241.9M1044.5 234.2V244.3M1045.5 233.0V240.1M1046.5 232.1V239.7M1047.5 231.9V240.0M1048.5 232.2V240.3M1049.5 231.7V241.3M1050.5 231.5V239.6M1051.5 231.3V238.9M1052.5 231.4V240.1M1053.5 231.9V239.0M1054.5 230.5V238.2M1055.5 229.9V238.1M1056.5 230.9V237.7M1057.5 230.6V237.7M1058.5 227.4V237.0M1059.5 229.7V236.8M1060.5 228.5V238.8M1061.5 229.5V236.8M1062.5 228.7V236.2M1063.5 229.3V239.7M1064.5 229.1V237.0M1065.5 227.8V235.4M1066.5 225.7V237.8M1067.5 223.2V235.7M1068.5 226.5V234.2M1069.5 225.9V235.1M1070.5 225.8V233.7M1071.5 223.2V238.1M1072.5 225.1V233.9M1073.5 226.0V233.6M1074.5 226.2V233.0M1075.5 225.8V233.6M1076.5 224.4V237.6M1077.5 224.4V233.1M1078.5 224.9V233.0M1079.5 221.4V232.7M1080.5 224.5V232.3M1081.5 223.9V233.7M1082.5 224.8V231.3M1083.5 223.2V231.4M1084.5 223.0V231.5M1085.5 220.9V230.4M1086.5 222.4V231.5M1087.5 222.1V234.3M1088.5 223.0V229.5M1089.5 221.9V229.4M1090.5 222.2V231.9M1091.5 222.0V229.8M1092.5 220.7V229.5M1093.5 222.5V230.2M1094.5 221.0V230.3M1095.5 221.9V229.9M1096.5 222.2V230.4M1097.5 222.7V229.4M1098.5 219.9V230.8M1099.5 222.8V230.0M1100.5 222.8V229.5M1101.5 222.7V229.5M1102.5 221.5V230.7M1103.5 222.3V229.8M1104.5 221.3V229.5M1105.5 222.8V229.0M1106.5 222.2V229.0M1107.5 222.1V229.5M1108.5 220.1V232.0M1109.5 218.6V232.7M1110.5 222.0V228.9M1111.5 222.2V228.3M1112.5 220.7V228.3M1113.5 220.8V228.6M1114.5 218.3V228.3M1115.5 219.7V229.0M1116.5 221.4V232.3M1117.5 219.8V228.6M1118.5 218.1V228.3M1119.5 218.0V227.1M1120.5 220.7V228.0M1121.5 220.4V230.4M1122.5 219.0V227.8M1123.5 219.2V231.2M1124.5 219.0V226.8M1125.5 220.0V226.6M1126.5 220.6V228.2M1127.5 219.5V230.1M1128.5 220.2V228.0M1129.5 219.2V227.7M1130.5 220.0V231.7M1131.5 219.9V228.2M1132.5 219.9V227.6M1133.5 220.6V228.4M1134.5 220.5V227.4M1135.5 220.3V227.5M1136.5 215.9V227.1M1137.5 219.9V228.1M1138.5 220.0V227.9M1139.5 220.6V228.4M1140.5 220.7V227.2M1141.5 220.7V227.2M1142.5 220.8V227.1M1143.5 220.7V227.1M1144.5 218.5V231.1M1145.5 219.4V227.1M1146.5 219.5V232.9M1147.5 220.2V227.7M1148.5 219.3V228.7M1149.5 219.7V227.2M1150.5 218.9V228.0M1151.5 219.8V227.4M1152.5 220.7V227.1M1153.5 219.2V227.0M1154.5 219.6V227.5M1155.5 220.3V226.9M1156.5 220.4V231.7M1157.5 220.0V229.3M1158.5 215.3V227.3M1159.5 220.1V226.8M1160.5 219.6V226.7M1161.5 219.4V226.8M1162.5 218.9V227.8M1163.5 217.4V226.9M1164.5 220.2V226.7M1165.5 218.9V227.8M1166.5 219.4V227.7M1167.5 219.6V226.9M1168.5 220.1V226.3M1169.5 220.1V227.1M1170.5 218.8V230.2M1171.5 220.2V226.3M1172.5 220.3V226.6M1173.5 215.4V227.3M1174.5 219.3V226.4M1175.5 220.3V227.9M1176.5 218.3V227.4M1177.5 219.7V226.7M1178.5 216.6V227.0M1179.5 219.6V229.2M1180.5 218.7V227.5M1181.5 216.5V226.8M1182.5 218.8V228.0M1183.5 219.0V226.3M1184.5 220.4V229.2M1185.5 220.0V227.8M1186.5 220.0V227.9M1187.5 218.9V227.4M1188.5 220.4V228.5M1189.5 220.2V227.7M1190.5 219.9V226.9M1191.5 220.5V227.1M1192.5 220.7V226.8M1193.5 219.8V227.3M1194.5 219.2V227.5M1195.5 216.8V229.5M1196.5 220.3V228.5M1197.5 219.5V228.2M1198.5 219.1V228.0M1199.5 220.6V228.0M1200.5 219.2V229.3M1201.5 219.4V227.7M1202.5 220.6V227.5M1203.5 219.7V227.2M1204.5 220.6V227.2M1205.5 219.6V228.8M1206.5 219.4V227.6M1207.5 219.4V228.5M1208.5 220.0V229.9M1209.5 220.3V227.4M1210.5 220.4V227.3M1211.5 219.8V227.5M1212.5 219.9V230.8M1213.5 220.7V228.5M1214.5 219.3V228.9M1215.5 219.8V228.2M1216.5 221.1V227.2M1217.5 220.6V228.5M1218.5 220.7V228.1M1219.5 220.3V229.0M1220.5 220.7V228.7M1221.5 219.9V228.6M1222.5 220.1V227.6M1223.5 220.4V228.1M1224.5 220.8V227.5M1225.5 220.7V227.7M1226.5 215.9V229.9M1227.5 219.4V228.2M1228.5 219.4V226.9M1229.5 220.6V226.8M1230.5 216.1V227.4M1231.5 219.0V228.3M1232.5 217.3V227.8M1233.5 220.3V227.6M1234.5 216.4V227.3M1235.5 216.9V226.6M1236.5 218.3V227.8M1237.5 219.2V226.5M1238.5 219.5V226.9M1239.5 220.4V226.7M1240.5 215.6V229.5M1241.5 220.5V226.9M1242.5 220.2V227.4M1243.5 219.5V226.8M1244.5 219.5V227.1M1245.5 219.5V227.6M1246.5 220.4V227.8M1247.5 219.4V226.9M1248.5 220.0V227.4M1249.5 217.9V226.4M1250.5 218.5V228.3M1251.5 219.8V226.2M1252.5 220.0V226.9M1253.5 218.4V227.0M1254.5 217.8V227.6M1255.5 219.1V231.5M1256.5 218.4V226.0M1257.5 219.3V227.2M1258.5 219.7V226.7M1259.5 218.5V226.6M1260.5 218.9V228.7M1261.5 218.5V227.1M1262.5 219.2V227.0M1263.5 217.1V226.9M1264.5 220.0V226.3M1265.5 218.9V225.9M1266.5 219.2V227.0M1267.5 216.0V226.2M1268.5 219.8V227.4M1269.5 218.7V225.9M1270.5 219.6V227.6M1271.5 219.4V227.5M1272.5 218.6V227.7M1273.5 215.8V227.1M1274.5 220.0V229.0M1275.5 216.5V227.5M1276.5 218.9V226.6M1277.5 218.8V226.4M1278.5 215.2V227.2M1279.5 218.4V226.2M1280.5 219.3V226.1M1281.5 218.6V226.3M1282.5 219.5V227.7M1283.5 217.8V226.4M1284.5 219.8V227.3M1285.5 218.3V227.2M1286.5 219.6V227.7M1287.5 218.4V227.7M1288.5 219.3V227.1M1289.5 219.0V226.4M1290.5 219.4V227.2M1291.5 218.5V226.5M1292.5 219.8V226.2M1293.5 219.4V226.5" stroke="#9e9ef8" stroke-width="1.1" fill="none"/>
<path d="M95.5 261.8V268.6M96.5 261.8V268.5M97.5 260.8V267.9M98.5 258.2V268.3M99.5 260.0V268.6M100.5 261.1V268.6M101.5 256.7V268.0M102.5 261.6V268.9M103.5 260.9V268.9M104.5 259.2V269.0M105.5 260.7V268.0M106.5 262.1V268.3M107.5 261.6V268.2M108.5 258.8V268.3M109.5 257.3V268.9M110.5 261.5V271.8M111.5 256.9V268.2M112.5 257.6V267.5M113.5 261.3V270.9M114.5 260.5V268.2M115.5 261.6V268.5M116.5 261.5V268.5M117.5 260.5V268.9M118.5 261.5V267.9M119.5 261.7V268.3M120.5 261.8V268.8M121.5 260.1V268.3M122.5 260.2V268.0M123.5 260.8V268.3M124.5 260.6V268.7M125.5 259.0V268.8M126.5 261.9V267.5M127.5 261.2V270.1M128.5 260.6V268.9M129.5 261.7V268.9M130.5 261.0V267.8M131.5 262.1V268.8M132.5 258.4V267.8M133.5 258.4V269.2M134.5 259.5V269.3M135.5 260.9V268.2M136.5 261.2V272.3M137.5 262.4V268.2M138.5 260.9V268.5M139.5 261.2V268.2M140.5 262.1V268.6M141.5 260.9V269.8M142.5 262.0V268.2M143.5 261.1V270.4M144.5 261.9V268.3M145.5 261.5V268.9M146.5 261.3V271.4M147.5 262.1V271.8M148.5 261.6V268.8M149.5 262.1V268.8M150.5 260.9V269.3M151.5 261.3V269.3M152.5 261.4V268.5M153.5 260.4V271.9M154.5 261.7V268.0M155.5 256.9V269.0M156.5 261.4V269.1M157.5 260.7V268.7M158.5 261.3V268.2M159.5 261.9V268.8M160.5 261.3V268.8M161.5 261.9V269.0M162.5 260.8V267.7M163.5 262.0V269.4M164.5 258.9V268.6M165.5 260.7V269.3M166.5 260.8V268.7M167.5 261.8V267.5M168.5 261.5V267.7M169.5 260.8V267.4M170.5 261.2V268.5M171.5 261.5V268.7M172.5 258.8V267.8M173.5 261.6V267.5M174.5 256.6V272.3M175.5 261.6V268.2M176.5 260.9V268.2M177.5 260.4V268.2M178.5 261.1V268.5M179.5 257.0V271.3M180.5 259.1V268.6M181.5 260.8V267.9M182.5 261.8V268.2M183.5 257.6V268.4M184.5 261.0V267.7M185.5 261.3V268.5M186.5 260.9V269.1M187.5 256.9V268.8M188.5 260.9V269.2M189.5 262.2V268.4M190.5 261.0V268.7M191.5 261.2V268.9M192.5 262.3V269.0M193.5 261.2V268.6M194.5 261.5V267.8M195.5 259.6V267.8M196.5 261.3V268.2M197.5 261.7V272.7M198.5 260.8V270.7M199.5 261.9V268.9M200.5 262.2V268.3M201.5 257.0V269.1M202.5 261.1V268.5M203.5 260.8V268.3M204.5 262.5V269.7M205.5 261.3V268.6M206.5 262.1V269.0M207.5 261.2V268.1M208.5 261.6V269.1M209.5 261.2V267.8M210.5 260.6V271.9M211.5 261.8V268.5M212.5 258.7V268.8M213.5 262.0V268.3M214.5 260.1V269.1M215.5 261.1V268.6M216.5 262.2V267.9M217.5 262.0V268.9M218.5 261.4V271.5M219.5 262.4V268.0M220.5 258.6V268.6M221.5 262.4V268.5M222.5 262.1V269.4M223.5 262.1V268.6M224.5 261.0V269.2M225.5 261.4V268.6M226.5 261.4V269.1M227.5 261.6V269.5M228.5 263.4V269.0M229.5 265.8V273.1M230.5 270.9V283.0M231.5 281.3V300.0M232.5 298.3V323.0M233.5 321.3V348.3M234.5 346.6V370.8M235.5 369.1V387.5M236.5 385.7V398.9M237.5 397.0V406.5M238.5 404.1V410.8M239.5 407.8V413.4M240.5 409.3V415.9M241.5 409.9V417.4M242.5 408.2V418.7M243.5 412.5V419.6M244.5 413.4V420.5M245.5 413.6V421.6M246.5 415.2V422.7M247.5 415.2V422.5M248.5 416.0V423.8M249.5 417.4V424.6M250.5 419.2V425.4M251.5 419.4V427.3M252.5 420.6V427.8M253.5 420.5V427.9M254.5 421.9V428.8M255.5 422.3V430.2M256.5 422.5V431.8M257.5 424.1V431.4M258.5 423.9V433.2M259.5 424.4V433.1M260.5 426.6V432.7M261.5 426.3V436.9M262.5 424.1V434.5M263.5 427.7V437.1M264.5 428.7V435.8M265.5 429.9V437.3M266.5 426.0V438.6M267.5 431.4V438.4M268.5 430.7V438.7M269.5 431.7V438.7M270.5 432.6V438.8M271.5 433.1V443.5M272.5 432.7V440.4M273.5 433.0V439.0M274.5 432.9V439.3M275.5 432.6V439.3M276.5 433.4V440.2M277.5 429.5V440.0M278.5 430.4V439.6M279.5 429.5V439.7M280.5 432.7V439.5M281.5 432.3V442.3M282.5 432.3V438.8M283.5 432.9V439.3M284.5 431.4V443.7M285.5 432.3V440.4M286.5 432.1V439.8M287.5 432.5V438.6M288.5 431.2V439.8M289.5 431.6V438.7M290.5 432.6V439.4M291.5 432.0V438.5M292.5 429.4V439.6M293.5 432.7V443.6M294.5 431.9V438.6M295.5 431.2V439.6M296.5 431.3V441.9M297.5 432.8V438.6M298.5 432.5V438.4M299.5 432.6V439.3M300.5 432.9V438.8M301.5 432.5V441.2M302.5 431.7V440.0M303.5 430.8V439.5M304.5 433.2V440.8M305.5 432.8V440.1M306.5 431.8V440.1M307.5 432.7V439.3M308.5 429.0V440.4M309.5 433.2V444.2M310.5 432.1V439.8M311.5 431.7V439.1M312.5 432.0V439.2M313.5 432.4V439.5M314.5 432.4V439.1M315.5 432.6V439.2M316.5 431.3V438.4M317.5 431.8V438.7M318.5 431.6V439.6M319.5 432.6V441.1M320.5 431.9V438.3M321.5 432.4V438.3M322.5 431.7V439.4M323.5 431.6V442.9M324.5 432.1V438.4M325.5 432.0V438.3M326.5 432.1V439.8M327.5 431.6V438.6M328.5 432.3V440.4M329.5 427.8V439.1M330.5 431.8V438.5M331.5 431.2V439.6M332.5 432.5V439.2M333.5 431.2V438.6M334.5 432.6V442.5M335.5 431.7V439.8M336.5 432.8V439.9M337.5 432.3V439.8M338.5 432.6V438.9M339.5 431.9V439.8M340.5 431.5V439.4M341.5 432.8V440.6M342.5 431.4V439.8M343.5 432.2V438.6M344.5 432.5V439.6M345.5 431.6V438.7M346.5 429.8V438.6M347.5 432.5V438.2M348.5 432.4V438.9M349.5 431.1V438.8M350.5 430.7V438.2M351.5 432.2V438.7M352.5 431.3V438.4M353.5 432.1V439.4M354.5 430.7V438.7M355.5 431.8V440.6M356.5 430.7V437.8M357.5 431.6V438.4M358.5 430.9V439.3M359.5 432.2V439.0M360.5 428.0V442.6M361.5 431.1V439.1M362.5 431.5V438.6M363.5 431.3V438.0M364.5 431.3V442.2M365.5 432.3V439.4M366.5 430.9V439.5M367.5 432.3V438.3M368.5 431.5V439.6M369.5 431.9V439.0M370.5 431.5V439.4M371.5 432.3V438.4M372.5 428.8V439.1M373.5 432.4V442.3M374.5 431.5V438.7M375.5 432.4V439.5M376.5 430.4V439.1M377.5 432.0V439.1M378.5 431.5V443.0M379.5 428.6V438.7M380.5 427.4V439.5M381.5 432.1V438.1M382.5 430.8V438.2M383.5 432.0V438.1M384.5 431.3V438.4M385.5 430.6V438.3M386.5 431.2V441.4M387.5 431.7V437.7M388.5 430.8V439.3M389.5 431.3V438.4M390.5 431.7V439.0M391.5 431.8V438.0M392.5 431.2V440.4M393.5 430.5V438.3M394.5 431.1V438.0M395.5 431.0V439.0M396.5 430.9V438.6M397.5 430.4V437.7M398.5 431.2V437.7M399.5 430.9V438.4M400.5 430.5V437.3M401.5 431.7V438.8M402.5 428.6V438.5M403.5 431.5V437.8M404.5 430.4V437.6M405.5 430.2V438.6M406.5 431.7V441.6M407.5 431.7V441.3M408.5 431.1V438.0M409.5 431.0V437.8M410.5 431.4V437.5M411.5 430.9V440.0M412.5 431.6V437.9M413.5 430.5V438.0M414.5 430.7V438.7M415.5 430.6V437.7M416.5 431.5V438.5M417.5 428.0V438.0M418.5 430.2V437.9M419.5 430.5V437.4M420.5 430.7V438.5M421.5 431.6V438.5M422.5 427.7V441.4M423.5 432.0V438.9M424.5 430.4V437.9M425.5 430.6V439.9M426.5 431.4V438.9M427.5 431.9V439.1M428.5 431.6V437.9M429.5 430.8V438.5M430.5 432.0V439.1M431.5 427.4V438.1M432.5 431.2V441.3M433.5 427.1V437.5M434.5 430.2V437.8M435.5 430.5V437.8M436.5 430.5V437.4M437.5 430.6V438.2M438.5 429.7V437.8M439.5 431.4V441.8M440.5 431.6V439.6M441.5 430.7V437.8M442.5 430.7V438.8M443.5 431.1V442.4M444.5 430.5V438.0M445.5 426.8V438.0M446.5 431.0V437.9M447.5 431.0V438.7M448.5 430.6V437.8M449.5 430.9V438.1M450.5 430.8V438.9M451.5 430.6V439.2M452.5 431.7V439.3M453.5 431.6V440.3M454.5 432.2V443.3M455.5 431.7V439.1M456.5 431.1V440.2M457.5 430.7V438.6M458.5 431.8V439.0M459.5 428.5V439.2M460.5 428.6V441.5M461.5 431.6V441.9M462.5 430.5V439.8M463.5 431.2V438.1M464.5 431.4V438.7M465.5 430.4V437.8M466.5 431.5V438.6M467.5 429.3V441.0M468.5 431.4V437.4M469.5 431.2V437.7M470.5 430.8V437.7M471.5 430.1V437.8M472.5 430.0V438.3M473.5 428.3V438.9M474.5 431.5V438.6M475.5 428.1V438.0M476.5 430.0V438.0M477.5 430.6V437.0M478.5 431.2V437.3M479.5 430.7V438.2M480.5 430.8V438.0M481.5 430.0V439.3M482.5 430.9V437.1M483.5 428.6V438.5M484.5 431.2V438.1M485.5 430.3V442.1M486.5 430.7V437.2M487.5 427.8V437.5M488.5 431.4V441.4M489.5 430.7V437.4M490.5 431.3V437.1M491.5 430.9V441.8M492.5 431.3V438.4M493.5 428.2V437.3M494.5 427.3V438.2M495.5 431.0V437.6M496.5 429.7V438.1M497.5 430.5V438.3M498.5 430.8V438.2M499.5 431.0V438.5M500.5 429.2V438.4M501.5 430.5V438.0M502.5 431.2V438.4M503.5 431.2V437.9M504.5 427.9V437.1M505.5 430.7V438.3M506.5 430.7V437.2M507.5 430.1V440.4M508.5 430.4V442.0M509.5 430.4V437.7M510.5 430.0V437.2M511.5 430.2V440.2M512.5 430.0V440.5M513.5 430.8V437.8M514.5 430.9V439.8M515.5 430.3V437.4M516.5 430.1V437.4M517.5 429.9V437.8M518.5 429.7V438.2M519.5 428.3V437.0M520.5 429.4V436.5M521.5 427.5V440.4M522.5 430.8V437.7M523.5 429.7V437.9M524.5 427.7V441.9M525.5 430.5V437.5M526.5 430.8V437.8M527.5 430.4V436.8M528.5 430.5V437.3M529.5 430.0V438.2M530.5 430.4V438.0M531.5 430.4V437.3M532.5 431.1V437.8M533.5 430.5V436.6M534.5 430.1V437.0M535.5 429.4V436.4M536.5 430.0V438.0M537.5 429.7V437.1M538.5 429.8V437.3M539.5 430.5V437.1M540.5 430.9V437.0M541.5 427.3V441.2M542.5 430.9V437.5M543.5 429.7V437.1M544.5 429.0V436.8M545.5 431.0V437.2M546.5 428.0V437.8M547.5 426.8V437.5M548.5 429.6V437.6M549.5 430.7V437.7M550.5 429.8V436.5M551.5 429.4V437.3M552.5 429.2V439.3M553.5 429.9V436.2M554.5 430.5V436.6M555.5 430.6V437.1M556.5 430.3V441.0M557.5 429.8V437.4M558.5 429.2V436.5M559.5 429.6V436.9M560.5 428.8V435.8M561.5 425.3V436.7M562.5 426.2V436.6M563.5 428.6V435.7M564.5 425.8V437.1M565.5 428.7V436.4M566.5 430.0V438.2M567.5 430.0V437.7M568.5 429.7V436.7M569.5 430.1V437.5M570.5 429.2V437.0M571.5 426.8V438.3M572.5 429.6V436.5M573.5 430.1V436.4M574.5 428.9V435.8M575.5 429.0V435.7M576.5 429.6V435.6M577.5 428.3V436.7M578.5 429.0V435.9M579.5 429.1V438.3M580.5 428.6V438.4M581.5 426.2V439.9M582.5 428.9V435.4M583.5 428.6V435.1M584.5 426.9V439.0M585.5 428.5V434.5M586.5 427.1V435.3M587.5 427.5V433.3M588.5 426.1V433.5M589.5 424.8V433.0M590.5 424.6V432.7M591.5 424.3V431.8M592.5 424.4V430.3M593.5 423.6V429.3M594.5 421.1V427.8M595.5 417.0V424.8M596.5 413.5V420.8M597.5 408.0V416.1M598.5 401.6V411.0M599.5 391.5V403.6M600.5 377.2V393.5M601.5 360.6V378.9M602.5 345.4V362.4M603.5 333.5V347.2M604.5 324.6V335.5M605.5 317.1V326.6M606.5 310.7V319.2M607.5 305.5V313.2M608.5 301.3V308.7M609.5 297.1V304.0M610.5 292.6V300.2M611.5 289.7V296.5M612.5 286.1V292.7M613.5 281.7V289.0M614.5 279.2V286.1M615.5 275.5V282.7M616.5 274.4V281.2M617.5 272.3V281.7M618.5 270.1V277.5M619.5 266.7V275.4M620.5 266.8V276.4M621.5 265.2V272.8M622.5 265.0V272.0M623.5 263.5V270.5M624.5 263.1V270.4M625.5 264.2V273.6M626.5 263.9V269.9M627.5 263.0V270.8M628.5 262.0V272.8M629.5 262.5V268.9M630.5 261.2V268.7M631.5 261.1V268.2M632.5 260.6V267.4M633.5 260.4V268.0M634.5 258.4V266.7M635.5 259.9V266.2M636.5 259.2V266.6M637.5 258.9V265.6M638.5 257.2V268.4M639.5 257.9V264.7M640.5 257.4V268.2M641.5 257.6V264.5M642.5 256.8V265.0M643.5 257.1V267.2M644.5 256.4V267.2M645.5 253.9V264.0M646.5 256.6V264.0M647.5 257.9V266.2M648.5 257.6V265.0M649.5 258.4V265.7M650.5 257.8V266.0M651.5 258.4V265.2M652.5 259.0V265.5M653.5 259.1V266.4M654.5 259.2V266.5M655.5 259.1V266.6M656.5 260.6V267.6M657.5 260.1V271.0M658.5 258.9V268.0M659.5 260.5V268.3M660.5 260.5V267.1M661.5 260.4V268.6M662.5 261.2V268.3M663.5 260.3V268.2M664.5 260.5V268.5M665.5 257.3V268.3M666.5 258.3V267.4M667.5 261.6V268.7M668.5 261.2V269.2M669.5 260.6V267.7M670.5 261.1V268.3M671.5 260.9V267.6M672.5 258.3V270.3M673.5 261.4V268.1M674.5 257.1V267.7M675.5 261.5V268.3M676.5 261.2V272.5M677.5 260.3V269.3M678.5 258.3V267.2M679.5 260.5V271.1M680.5 261.0V267.7M681.5 258.8V272.0M682.5 261.5V268.3M683.5 260.3V271.5M684.5 260.7V268.0M685.5 260.9V267.8M686.5 261.3V268.4M687.5 261.3V267.0M688.5 260.7V267.7M689.5 259.9V268.2M690.5 260.3V267.3M691.5 260.1V268.2M692.5 260.2V267.0M693.5 257.7V268.2M694.5 260.3V267.0M695.5 260.3V268.6M696.5 259.2V270.8M697.5 256.5V267.1M698.5 259.8V267.2M699.5 259.7V266.6M700.5 256.4V270.3M701.5 260.5V267.7M702.5 260.1V267.7M703.5 259.4V267.5M704.5 260.5V267.8M705.5 260.3V268.0M706.5 260.9V267.0M707.5 260.3V268.1M708.5 261.0V268.0M709.5 261.0V268.3M710.5 260.9V268.1M711.5 256.6V267.6M712.5 262.3V270.6M713.5 262.9V270.0M714.5 261.7V271.1M715.5 265.5V272.8M716.5 267.0V274.1M717.5 268.2V275.7M718.5 268.9V277.6M719.5 271.1V278.0M720.5 272.4V279.6M721.5 270.9V280.6M722.5 273.5V280.6M723.5 272.7V281.0M724.5 271.8V279.3M725.5 271.0V279.4M726.5 271.0V277.6M727.5 270.8V277.4M728.5 270.6V276.6M729.5 267.3V277.5M730.5 271.0V278.8M731.5 271.2V279.0M732.5 269.0V279.8M733.5 272.5V279.7M734.5 272.9V280.7M735.5 274.0V282.0M736.5 274.4V281.7M737.5 274.8V281.9M738.5 273.4V280.9M739.5 273.7V280.2M740.5 271.8V279.9M741.5 271.4V278.7M742.5 270.3V276.9M743.5 268.1V277.4M744.5 270.1V276.3M745.5 269.7V279.8M746.5 270.1V279.6M747.5 271.2V279.1M748.5 272.5V280.3M749.5 274.1V282.3M750.5 275.0V283.5M751.5 276.0V282.6M752.5 276.1V283.8M753.5 277.8V284.0M754.5 277.8V285.6M755.5 278.8V285.6M756.5 280.3V286.6M757.5 280.5V286.3M758.5 276.8V286.4M759.5 279.2V286.7M760.5 278.3V285.8M761.5 277.0V284.5M762.5 277.0V284.6M763.5 276.3V284.1M764.5 275.2V285.2M765.5 274.1V281.7M766.5 273.5V281.2M767.5 274.0V282.0M768.5 272.8V282.4M769.5 271.2V280.6M770.5 269.8V280.6M771.5 273.4V282.4M772.5 273.6V279.8M773.5 272.2V280.6M774.5 271.6V279.7M775.5 273.0V280.1M776.5 273.1V279.8M777.5 272.1V280.4M778.5 270.5V280.6M779.5 273.1V279.9M780.5 271.4V279.5M781.5 272.8V280.6M782.5 273.0V280.9M783.5 273.7V281.4M784.5 275.3V284.8M785.5 276.2V284.2M786.5 277.2V284.6M787.5 278.2V285.5M788.5 275.6V286.6M789.5 281.1V287.5M790.5 280.2V289.0M791.5 282.5V289.4M792.5 283.2V290.5M793.5 284.6V291.6M794.5 285.6V292.3M795.5 285.8V293.0M796.5 286.6V293.9M797.5 287.2V293.4M798.5 287.8V294.0M799.5 287.4V295.4M800.5 287.9V295.1M801.5 288.9V296.3M802.5 288.6V296.5M803.5 288.7V296.5M804.5 289.3V296.0M805.5 290.0V299.9M806.5 289.6V296.2M807.5 289.8V297.0M808.5 290.7V297.4M809.5 289.7V296.8M810.5 289.9V299.5M811.5 290.4V298.1M812.5 291.0V297.9M813.5 290.6V299.1M814.5 290.1V297.3M815.5 289.7V298.0M816.5 290.5V297.3M817.5 290.2V296.8M818.5 290.0V296.7M819.5 290.0V297.6M820.5 291.0V298.0M821.5 290.2V297.1M822.5 289.2V297.8M823.5 289.3V297.6M824.5 290.3V297.2M825.5 288.7V296.5M826.5 290.7V296.5M827.5 290.6V296.7M828.5 290.3V301.6M829.5 290.1V296.5M830.5 289.0V296.3M831.5 288.1V294.6M832.5 287.1V293.2M833.5 284.5V290.8M834.5 280.3V290.4M835.5 279.4V286.2M836.5 274.8V282.9M837.5 273.7V280.9M838.5 271.8V277.9M839.5 270.1V277.2M840.5 268.4V276.7M841.5 267.2V274.5M842.5 266.2V273.9M843.5 264.6V272.7M844.5 264.1V271.2M845.5 262.9V270.3M846.5 263.4V270.2M847.5 262.3V269.7M848.5 261.4V270.0M849.5 261.8V269.5M850.5 261.6V268.7M851.5 260.9V269.1M852.5 262.2V268.5M853.5 261.4V268.3M854.5 262.1V269.2M855.5 260.7V268.0M856.5 261.6V268.9M857.5 261.8V267.8M858.5 261.4V268.5M859.5 261.6V268.3M860.5 261.6V268.6M861.5 260.4V268.0M862.5 261.6V268.4M863.5 260.2V268.1M864.5 261.4V268.1M865.5 261.9V268.5M866.5 261.5V271.9M867.5 261.0V267.9M868.5 261.6V267.7M869.5 261.1V268.5M870.5 259.8V268.5M871.5 262.0V269.6M872.5 262.5V269.1M873.5 261.2V269.4M874.5 261.4V268.1M875.5 261.9V269.0M876.5 261.3V268.1M877.5 261.4V268.1M878.5 261.0V268.8M879.5 260.9V269.2M880.5 261.6V268.4M881.5 260.9V269.5M882.5 262.3V269.1M883.5 261.6V268.7M884.5 261.4V268.7M885.5 257.1V268.4M886.5 261.4V268.2M887.5 262.0V269.1M888.5 257.4V267.8M889.5 261.7V268.3M890.5 261.8V268.3M891.5 261.9V268.0M892.5 261.3V268.8M893.5 257.1V268.1M894.5 261.8V268.4M895.5 257.2V267.8M896.5 260.6V269.0M897.5 261.0V268.7M898.5 261.2V268.5M899.5 260.5V271.3M900.5 261.4V270.4M901.5 261.3V268.8M902.5 260.7V268.9M903.5 261.6V267.8M904.5 261.5V268.0M905.5 260.7V270.1M906.5 261.1V267.7M907.5 261.7V267.7M908.5 261.8V269.0M909.5 262.4V268.2M910.5 262.2V269.2M911.5 262.2V271.1M912.5 261.8V268.2M913.5 262.4V269.2M914.5 262.5V269.8M915.5 261.5V268.4M916.5 262.1V268.2M917.5 261.2V269.4M918.5 261.8V268.9M919.5 262.6V268.4M920.5 261.5V269.9M921.5 261.3V272.9M922.5 261.8V268.6M923.5 261.5V269.3M924.5 261.7V273.3M925.5 261.2V269.6M926.5 262.2V269.9M927.5 261.5V272.5M928.5 262.0V269.0M929.5 261.6V269.2M930.5 258.7V269.4M931.5 259.1V268.8M932.5 262.1V268.4M933.5 262.1V269.5M934.5 261.2V268.1M935.5 258.0V269.2M936.5 262.2V272.7M937.5 261.7V269.0M938.5 261.5V269.2M939.5 258.0V272.3M940.5 262.3V268.7M941.5 261.3V268.8M942.5 258.4V269.3M943.5 262.7V270.6M944.5 261.8V270.0M945.5 262.6V270.5M946.5 261.7V269.6M947.5 262.2V269.8M948.5 259.2V270.1M949.5 262.3V272.7M950.5 261.9V269.0M951.5 261.8V270.2M952.5 260.2V273.9M953.5 262.2V269.5M954.5 262.4V269.1M955.5 259.8V270.1M956.5 262.5V270.5M957.5 262.8V270.9M958.5 261.9V268.9M959.5 261.8V269.1M960.5 258.6V269.2M961.5 262.4V269.2M962.5 260.9V268.6M963.5 261.9V269.1M964.5 262.6V269.7M965.5 261.4V268.5M966.5 261.5V268.5M967.5 261.1V269.3M968.5 261.7V268.9M969.5 261.2V269.3M970.5 261.7V270.8M971.5 260.9V267.7M972.5 257.4V268.8M973.5 261.2V268.6M974.5 261.0V271.6M975.5 261.3V267.6M976.5 260.8V268.5M977.5 260.1V269.0M978.5 260.3V268.4M979.5 261.1V272.0M980.5 260.5V267.8M981.5 261.8V267.4M982.5 260.9V267.5M983.5 261.3V267.9M984.5 262.0V267.8M985.5 261.2V269.9M986.5 261.3V271.3M987.5 261.4V269.1M988.5 257.9V268.2M989.5 261.9V268.7M990.5 261.9V269.0M991.5 261.8V268.4M992.5 259.9V269.0M993.5 261.4V269.4M994.5 261.9V267.7M995.5 260.8V267.5M996.5 261.7V268.0M997.5 260.9V272.5M998.5 261.6V269.5M999.5 261.6V268.1M1000.5 260.6V268.3M1001.5 258.7V269.0M1002.5 261.4V268.4M1003.5 258.2V267.5M1004.5 261.8V268.7M1005.5 261.3V268.5M1006.5 260.7V268.1M1007.5 257.9V267.9M1008.5 258.2V270.7M1009.5 260.6V268.9M1010.5 260.9V267.8M1011.5 261.4V268.6M1012.5 261.1V268.0M1013.5 261.4V269.7M1014.5 262.2V268.9M1015.5 262.1V268.4M1016.5 257.7V268.3M1017.5 260.8V268.3M1018.5 260.9V270.6M1019.5 260.6V269.4M1020.5 257.5V268.7M1021.5 261.0V268.3M1022.5 261.9V269.4M1023.5 261.8V271.0M1024.5 260.6V268.9M1025.5 261.2V268.5M1026.5 261.8V267.6M1027.5 260.5V267.8M1028.5 262.0V270.4M1029.5 262.1V268.4M1030.5 261.0V269.1M1031.5 260.2V268.2M1032.5 260.9V268.8M1033.5 260.6V268.2M1034.5 261.0V268.6M1035.5 261.1V267.9M1036.5 259.9V267.6M1037.5 260.3V268.0M1038.5 259.4V268.9M1039.5 260.5V268.4M1040.5 261.6V272.7M1041.5 260.9V267.9M1042.5 258.6V268.0M1043.5 257.6V268.5M1044.5 261.2V268.4M1045.5 260.5V268.1M1046.5 261.7V268.2M1047.5 261.1V268.9M1048.5 257.3V267.6M1049.5 260.5V268.5M1050.5 261.5V269.1M1051.5 260.5V268.8M1052.5 260.8V268.9M1053.5 261.7V270.8M1054.5 260.9V269.1M1055.5 261.0V268.2M1056.5 262.1V268.8M1057.5 261.7V270.9M1058.5 262.2V269.0M1059.5 258.4V269.4M1060.5 261.3V269.2M1061.5 261.1V268.6M1062.5 262.0V269.0M1063.5 261.2V269.2M1064.5 260.2V268.7M1065.5 260.9V268.3M1066.5 262.4V268.7M1067.5 259.1V271.3M1068.5 258.9V268.1M1069.5 262.2V268.2M1070.5 261.1V269.1M1071.5 262.0V268.9M1072.5 261.8V267.9M1073.5 258.4V269.0M1074.5 260.9V268.3M1075.5 258.8V271.2M1076.5 261.0V268.3M1077.5 261.1V269.2M1078.5 260.7V268.2M1079.5 262.0V268.2M1080.5 261.2V268.7M1081.5 260.3V268.8M1082.5 260.4V269.4M1083.5 262.1V268.5M1084.5 261.4V268.7M1085.5 261.5V268.8M1086.5 261.9V271.8M1087.5 261.6V268.9M1088.5 261.1V267.7M1089.5 260.7V268.0M1090.5 261.5V269.2M1091.5 261.1V269.0M1092.5 261.9V268.1M1093.5 258.8V268.6M1094.5 261.7V269.4M1095.5 262.3V269.3M1096.5 261.7V269.3M1097.5 262.2V268.3M1098.5 260.9V268.7M1099.5 261.9V268.1M1100.5 262.2V268.8M1101.5 260.3V268.4M1102.5 260.5V267.8M1103.5 261.5V268.4M1104.5 261.7V269.1M1105.5 261.8V268.6M1106.5 261.9V269.1M1107.5 261.7V268.3M1108.5 261.0V267.5M1109.5 261.2V267.9M1110.5 260.3V267.7M1111.5 261.4V268.2M1112.5 261.4V269.9M1113.5 260.5V268.5M1114.5 260.7V270.7M1115.5 256.8V272.3M1116.5 261.9V268.9M1117.5 261.6V267.8M1118.5 261.2V272.1M1119.5 261.2V270.0M1120.5 261.1V270.1M1121.5 261.4V270.7M1122.5 258.9V269.2M1123.5 261.4V267.7M1124.5 260.4V268.6M1125.5 261.3V268.4M1126.5 260.9V268.3M1127.5 261.9V268.5M1128.5 260.4V269.1M1129.5 260.9V268.3M1130.5 262.0V268.3M1131.5 261.0V268.6M1132.5 261.4V268.0M1133.5 261.6V268.3M1134.5 261.6V268.1M1135.5 261.3V268.9M1136.5 262.4V269.7M1137.5 261.6V268.5M1138.5 261.8V269.6M1139.5 261.6V269.1M1140.5 261.7V269.2M1141.5 262.6V269.4M1142.5 258.4V269.3M1143.5 261.4V269.3M1144.5 262.3V268.3M1145.5 261.1V268.6M1146.5 261.0V269.3M1147.5 261.4V268.7M1148.5 261.9V268.0M1149.5 259.8V268.2M1150.5 260.7V267.9M1151.5 261.4V267.7M1152.5 261.6V267.9M1153.5 260.6V269.1M1154.5 260.8V268.5M1155.5 260.4V268.4M1156.5 260.9V268.6M1157.5 260.0V268.2M1158.5 261.4V267.4M1159.5 260.5V268.9M1160.5 260.8V268.0M1161.5 259.3V268.3M1162.5 260.7V267.3M1163.5 261.3V268.2M1164.5 261.5V267.7M1165.5 257.3V272.4M1166.5 257.7V268.2M1167.5 261.9V268.9M1168.5 261.4V268.6M1169.5 262.0V267.7M1170.5 261.3V268.9M1171.5 262.1V269.3M1172.5 259.9V268.0M1173.5 258.6V268.9M1174.5 261.4V269.3M1175.5 261.7V270.1M1176.5 260.1V269.2M1177.5 261.7V267.7M1178.5 261.2V272.7M1179.5 261.2V268.3M1180.5 261.0V268.5M1181.5 261.4V268.4M1182.5 260.4V269.9M1183.5 260.3V268.7M1184.5 261.6V267.6M1185.5 261.1V268.2M1186.5 261.4V268.6M1187.5 261.2V267.4M1188.5 261.6V267.8M1189.5 259.1V267.7M1190.5 257.6V267.9M1191.5 261.4V267.8M1192.5 261.5V267.3M1193.5 261.3V268.4M1194.5 260.0V267.8M1195.5 261.3V271.8M1196.5 260.9V268.1M1197.5 260.1V267.9M1198.5 260.8V268.0M1199.5 261.3V268.1M1200.5 260.7V267.2M1201.5 260.5V267.2M1202.5 260.6V267.5M1203.5 260.6V268.3M1204.5 260.6V268.9M1205.5 261.6V267.6M1206.5 258.2V268.0M1207.5 261.2V270.3M1208.5 260.8V269.0M1209.5 260.1V270.2M1210.5 260.6V268.1M1211.5 260.9V268.2M1212.5 260.8V268.5M1213.5 260.8V270.8M1214.5 260.0V269.1M1215.5 260.9V269.2M1216.5 260.2V269.2M1217.5 261.4V268.0M1218.5 262.4V270.1M1219.5 262.3V271.6M1220.5 260.9V271.8M1221.5 261.8V269.3M1222.5 261.0V268.8M1223.5 261.2V268.1M1224.5 261.0V268.9M1225.5 261.5V268.8M1226.5 261.7V269.1M1227.5 261.6V268.3M1228.5 261.0V270.7M1229.5 262.1V268.1M1230.5 260.7V267.9M1231.5 260.4V268.5M1232.5 261.5V272.2M1233.5 261.7V269.8M1234.5 260.8V268.2M1235.5 261.2V269.2M1236.5 261.5V268.7M1237.5 260.9V268.6M1238.5 260.9V269.1M1239.5 261.4V268.9M1240.5 261.5V268.3M1241.5 260.8V270.6M1242.5 261.0V271.8M1243.5 261.4V268.7M1244.5 261.8V268.7M1245.5 258.9V272.0M1246.5 261.5V269.0M1247.5 261.4V268.2M1248.5 259.3V269.1M1249.5 260.8V268.7M1250.5 261.6V267.7M1251.5 261.3V268.8M1252.5 261.5V268.6M1253.5 261.3V269.0M1254.5 260.9V268.1M1255.5 260.8V267.4M1256.5 260.9V268.9M1257.5 260.1V268.5M1258.5 261.5V268.0M1259.5 261.9V268.1M1260.5 260.7V269.3M1261.5 262.1V268.1M1262.5 261.2V269.0M1263.5 262.2V269.3M1264.5 262.2V267.8M1265.5 261.0V268.3M1266.5 261.0V268.4M1267.5 260.8V268.8M1268.5 262.0V268.1M1269.5 261.3V268.1M1270.5 260.9V270.6M1271.5 258.3V269.1M1272.5 260.8V268.2M1273.5 262.0V268.0M1274.5 258.7V269.3M1275.5 262.4V268.4M1276.5 261.8V268.8M1277.5 261.4V270.1M1278.5 261.4V268.4M1279.5 260.8V269.1M1280.5 261.0V267.8M1281.5 260.9V269.2M1282.5 260.7V271.4M1283.5 261.7V269.2M1284.5 262.0V267.8M1285.5 261.7V268.6M1286.5 258.6V270.3M1287.5 260.8V269.2M1288.5 261.9V268.2M1289.5 261.7V269.3M1290.5 260.6V268.1M1291.5 261.7V269.1M1292.5 261.2V270.9M1293.5 261.4V267.7" stroke="#00f000" stroke-width="1.1" fill="none"/>
<path d="M208 251L215 258.5L208 266L201 258.5Z" stroke="#9b9bf7" stroke-width="1.5" fill="none"/>
<path d="M199 258.5H217" stroke="#9b9bf7" stroke-width="1.2"/>
<path d="M202.5 119H213.5L208 130Z" fill="#9b9bf7"/>
<text x="208" y="145.5" font-size="17" fill="#9e9ef8" text-anchor="middle" font-family="Liberation Sans" font-weight="bold">T</text>
<path d="M179 596L195 580L211 596Z" stroke="#8a8a8a" stroke-width="2" fill="none"/>
<rect x="1272" y="194" width="22" height="13" fill="#000"/>
<text x="1293" y="205" font-size="12" fill="#ff8000" text-anchor="end" font-family="Liberation Sans">Prs</text>
<rect x="1262" y="212" width="32" height="13" fill="#000" stroke="#9b9bf7" stroke-width=".6"/>
<text x="1293" y="223" font-size="12" fill="#9b9bf7" text-anchor="end" font-family="Liberation Sans">Pload</text>
<rect x="1275" y="256" width="19" height="12" fill="#000"/>
<text x="1293" y="267" font-size="12" fill="#00ee00" text-anchor="end" font-family="Liberation Sans">Pis</text>
<path d="M56.5 147.5H84.5L93.5 156.5L84.5 165.5H56.5Z" stroke="#8a8800" stroke-width="1.2" fill="none"/>
<text x="59.5" y="163.0" font-size="18.5" fill="#8f8d10" font-family="Liberation Sans" stroke="#8f8d10" stroke-width=".5" transform="translate(59.5 0) scale(.64 1) translate(-59.5 0)">C1</text>
<path d="M78 160.5H82.6V152.5H85.2M80.8 160.5V152.5H82.6" stroke="#8f8d10" stroke-width="1.2" fill="none"/>
<path d="M56.5 195.5H84.5L93.5 204.75L84.5 214.0H56.5Z" stroke="#ff8000" stroke-width="1.2" fill="#ff8000"/>
<text x="59.5" y="211.25" font-size="18.5" fill="#000" font-family="Liberation Sans" stroke="#000" stroke-width=".5" transform="translate(59.5 0) scale(.64 1) translate(-59.5 0)">C3</text>
<path d="M56.5 215.0H84.5L93.5 223.75L84.5 232.5H56.5Z" stroke="#4a4a80" stroke-width="1.2" fill="none"/>
<text x="59.5" y="230.25" font-size="18.5" fill="#5c5c96" font-family="Liberation Sans" stroke="#5c5c96" stroke-width=".5" transform="translate(59.5 0) scale(.64 1) translate(-59.5 0)">C4</text>
<path d="M56.5 250.5H84.5L93.5 259.0L84.5 267.5H56.5Z" stroke="#4a4a80" stroke-width="1.2" fill="none"/>
<text x="59.5" y="265.5" font-size="18.5" fill="#5c5c96" font-family="Liberation Sans" stroke="#5c5c96" stroke-width=".5" transform="translate(59.5 0) scale(.64 1) translate(-59.5 0)">C4</text>
<path d="M78 263.0H82.6V255.0H85.2M80.8 263.0V255.0H82.6" stroke="#5c5c96" stroke-width="1.2" fill="none"/>
<path d="M56.5 258.0H84.5L93.5 266.5L84.5 275.0H56.5Z" stroke="#008000" stroke-width="1.2" fill="none"/>
<text x="59.5" y="273.0" font-size="18.5" fill="#008000" font-family="Liberation Sans" stroke="#008000" stroke-width=".5" transform="translate(59.5 0) scale(.64 1) translate(-59.5 0)">C2</text>
<path d="M56.5 392.5H84.5L93.5 401.5L84.5 410.5H56.5Z" stroke="#8a8800" stroke-width="1.2" fill="none"/>
<text x="59.5" y="408.0" font-size="18.5" fill="#8f8d10" font-family="Liberation Sans" stroke="#8f8d10" stroke-width=".5" transform="translate(59.5 0) scale(.64 1) translate(-59.5 0)">C1</text>
<path d="M1333 147V166H1304L1295.5 156.5L1304 147Z" fill="#7f7a00"/>
<text x="1318" y="163" font-size="16" fill="#000" text-anchor="middle" font-family="Liberation Sans">A</text>
<path d="M1333 249.5V268H1304L1295.5 258.7L1304 249.5Z" stroke="#4a4a80" stroke-width="1.2" fill="none"/>
<text x="1318" y="265" font-size="16" fill="#5c5c96" text-anchor="middle" font-family="Liberation Sans">B</text>
</svg>
<svg class="a" style="left:0;top:0" width="2110" height="900" viewBox="0 0 2110 900">
<path d="M81 61.2L91.2 53.3V68.8Z" fill="#fff"/>
<path d="M90 61Q104 62 105 80" stroke="#fff" stroke-width="4.2" fill="none"/>
<rect x="160" y="51.5" width="25" height="2.6" fill="#fff"/><rect x="167" y="49.8" width="11" height="2.5" fill="#fff"/>
<rect x="162" y="56" width="21" height="25" fill="#fff"/>
<path d="M165.6 59V78M170.4 59V78M175.2 59V78M180 59V78" stroke="#2a3239" stroke-width="1.9"/>
<circle cx="246.5" cy="62" r="11" stroke="#fff" stroke-width="2" fill="none"/>
<path d="M240 62H253M246.5 55.5V68.5" stroke="#1a9bf0" stroke-width="3"/>
<path d="M254 70L263 79" stroke="#fff" stroke-width="5"/>
<rect x="317" y="50" width="22" height="32" fill="#fff"/>
<rect x="320" y="53.3" width="16" height="6.5" fill="#2a3239"/>
<circle cx="328" cy="71" r="8" fill="#2a3239"/>
<path d="M322.5 76.5L333.5 65.5" stroke="#fff" stroke-width="2.4"/>
<path d="M389.5 75.8H421.5" stroke="#fff" stroke-width="1.5"/>
<path d="M392 76V54.5M396.5 76V60M401 76V64M405.5 76V67M410 76V69M414.5 76V70M419 76V70.5" stroke="#fff" stroke-width="1.6"/>
<circle cx="480" cy="63.4" r="11.2" stroke="#fff" stroke-width="2" fill="none"/>
<path d="M488 71.5L497 80.5" stroke="#fff" stroke-width="5"/>
<path d="M549.6 69.2L568.4 50L577.9 59.4L559.6 78.4Z" fill="#fff"/>
<path d="M549.6 69.2L546 81.8L559.6 78.4Z" fill="#fff"/>
<path d="M550.9 70.8L552.6 77L557.9 76.6Z" fill="#2b363c"/>
<path d="M557 68.6L568.5 56.6" stroke="#2b363c" stroke-width="1.9"/>
<path d="M702.76 80.06 L702.43 81.71 L699.84 82.23 L699.14 83.27 L699.64 85.86 L698.24 86.79 L696.05 85.33 L694.82 85.57 L693.34 87.76 L691.69 87.43 L691.17 84.84 L690.13 84.14 L687.54 84.64 L686.61 83.24 L688.07 81.05 L687.83 79.82 L685.64 78.34 L685.97 76.69 L688.56 76.17 L689.26 75.13 L688.76 72.54 L690.16 71.61 L692.35 73.07 L693.58 72.83 L695.06 70.64 L696.71 70.97 L697.23 73.56 L698.27 74.26 L700.86 73.76 L701.79 75.16 L700.33 77.35 L700.57 78.58Z" fill="#fff"/>
<circle cx="694.2" cy="79.2" r="3.3" fill="#1b2023"/>
<path d="M690 109L698 109L694 113Z" fill="#fff"/>
<rect x="1308" y="87" width="9" height="7" fill="#00e600"/><rect x="1296" y="96.5" width="32" height="2" fill="#00e600"/><rect x="1311.7" y="93" width="1.8" height="4" fill="#00e600"/><rect x="1303" y="97" width="1.8" height="4" fill="#00e600"/><rect x="1320" y="97" width="1.8" height="4" fill="#00e600"/><rect x="1299" y="100" width="9" height="7" fill="#00e600"/><rect x="1316" y="100" width="9" height="7" fill="#00e600"/>
<path d="M72.5 615.5L80.5 607L88.5 615.5Z" fill="#fff"/>
<path d="M72.5 620.5L80.5 629L88.5 620.5Z" fill="#fff"/>
<path d="M1301.5 615.5L1309.5 607L1317.5 615.5Z" fill="#fff"/>
<path d="M1301.5 620.5L1309.5 629L1317.5 620.5Z" fill="#fff"/>
<path d="M172.3 692H168.8V715H172.3M174.2 692H177.7V715H174.2" stroke="#fff" stroke-width="2.1" fill="none"/>
<path d="M221 612.5L231 623.5M231 612.5L221 623.5" stroke="#fff" stroke-width="2.4"/>
<path d="M361 612.5L371 623.5M371 612.5L361 623.5" stroke="#111" stroke-width="2.8"/>
<path d="M921 661.8A13 13 0 0 1 932.2 675" stroke="#fff" stroke-width="3.6" fill="none"/>
<path d="M914.5 664.8L921.2 659.3V670.3Z" fill="#fff"/>
<path d="M909.6 676A13 13 0 0 0 920.5 688.3" stroke="#fff" stroke-width="3.6" fill="none"/>
<path d="M927.5 685.3L921 680V690.7Z" fill="#fff"/>
<path d="M905 721H929L935.5 727.5V751H905Z" stroke="#fff" stroke-width="2" fill="none"/>
<rect x="913.5" y="721" width="12.5" height="10" fill="none" stroke="#fff" stroke-width="2"/>
<rect x="910" y="737" width="20" height="14" fill="#fff"/>
<rect x="188" y="803" width="15" height="3" fill="#ff4500"/><path d="M188 815L195.5 807.5L203 815Z" fill="#ff4500"/>
<path d="M1259 798.7L1297.6 764.2L1334 798.7V840H1259Z" fill="#2b363c" stroke="#101417" stroke-width="1.5"/>
<path d="M1297.6 767L1330 799.2L1297.6 830L1265 799.2Z" fill="none" stroke="#ff8000" stroke-width="1.6"/>
<path d="M1297.6 775.4L1321.4 799.2L1297.6 823L1273.8 799.2Z" fill="none" stroke="#1e9ef5" stroke-width="4.8"/>
<path d="M1284.5 809Q1291 801 1297.5 799.5Q1303.5 797 1306.5 788" stroke="#1e9ef5" stroke-width="3.4" fill="none"/>
<text x="1291" y="799.5" font-size="15" font-weight="bold" fill="#1e9ef5" font-family="Liberation Sans" text-anchor="middle" transform="translate(1291 0) scale(.85 1) translate(-1291 0)">R</text>
<text x="1303.5" y="810.5" font-size="15" font-weight="bold" fill="#1e9ef5" font-family="Liberation Sans" text-anchor="middle" transform="translate(1303.5 0) scale(.85 1) translate(-1303.5 0)">S</text>
<text x="1297" y="838.5" font-size="18" font-weight="bold" fill="#fff" font-family="Liberation Sans" text-anchor="middle" transform="translate(1297 0) scale(.83 1) translate(-1297 0)">Menu</text>
</svg>
<div class="a" style="left:1421px;top:19px;width:335px;height:862px;background:#4e72aa;"></div>
<div class="a" style="left:1756px;top:19px;width:336px;height:862px;background:#2d3249;"></div>
<div class="t" style="left:1452px;text-align:left;top:28.4px;line-height:25.2px;font-size:21px;font-weight:bold;color:#fff;-webkit-text-stroke:.5px #fff;"><span class="sx" style="transform:scaleX(.83);transform-origin:0 50%">Horizontal</span></div>
<div class="a" style="left:1449px;top:69px;width:74px;height:49px;border-radius:8px;background:linear-gradient(#c8c9d0,#b3b4bc);border:1.8px solid #606167;box-shadow:0 0 0 .8px rgba(170,172,180,.55),0 1px 14px 5px rgba(8,14,45,.5);"></div>
<div class="t" style="left:1429px;width:114px;top:81.5px;line-height:24px;font-size:20px;font-weight:bold;color:#111;-webkit-text-stroke:.55px #111;"><span class="sx" style="transform:scaleX(0.8)">Zoom</span></div>
<div class="a" style="left:1449px;top:169px;width:74px;height:49px;border-radius:8px;background:linear-gradient(#c8c9d0,#b3b4bc);border:1.8px solid #606167;box-shadow:0 0 0 .8px rgba(170,172,180,.55),0 1px 14px 5px rgba(8,14,45,.5);"></div>
<div class="t" style="left:1429px;width:114px;top:173.5px;line-height:20px;font-size:20px;font-weight:bold;color:#111;-webkit-text-stroke:.55px #111;"><span class="sx" style="transform:scaleX(0.8)">Hori-<br>zontal</span></div>
<div class="a" style="left:1449px;top:269px;width:74px;height:49px;border-radius:8px;background:linear-gradient(#c8c9d0,#b3b4bc);border:1.8px solid #606167;box-shadow:0 0 0 .8px rgba(170,172,180,.55),0 1px 14px 5px rgba(8,14,45,.5);"></div>
<div class="t" style="left:1429px;width:114px;top:273.5px;line-height:20px;font-size:20px;font-weight:bold;color:#111;-webkit-text-stroke:.55px #111;"><span class="sx" style="transform:scaleX(0.8)">Acqui-<br>sition</span></div>
<div class="t" style="left:1490.5px;width:300px;top:45.6px;line-height:22.8px;font-size:19px;font-weight:bold;color:#fff;-webkit-text-stroke:.5px #fff;"><span class="sx" style="transform:scaleX(.8)">Position</span></div>
<div class="t" style="left:1490.5px;width:300px;top:203.6px;line-height:22.8px;font-size:19px;font-weight:bold;color:#fff;-webkit-text-stroke:.5px #fff;"><span class="sx" style="transform:scaleX(.8)">Scale</span></div>
<div class="t" style="left:1670px;text-align:left;top:125.5px;line-height:15.0px;font-size:12.5px;font-weight:bold;color:#e8e8ee;"><span class="sx" style="transform:scaleX(.8);transform-origin:0 50%">Push</span></div>
<div class="t" style="left:1670px;text-align:left;top:139.5px;line-height:15.0px;font-size:12.5px;font-weight:bold;color:#e8e8ee;"><span class="sx" style="transform:scaleX(.8);transform-origin:0 50%">to Zero</span></div>
<div class="t" style="left:1683px;text-align:left;top:310.5px;line-height:15.0px;font-size:12.5px;font-weight:bold;color:#e8e8ee;"><span class="sx" style="transform:scaleX(.8);transform-origin:0 50%">Coarse</span></div>
<div class="t" style="left:1683px;text-align:left;top:324.5px;line-height:15.0px;font-size:12.5px;font-weight:bold;color:#e8e8ee;"><span class="sx" style="transform:scaleX(.8);transform-origin:0 50%">Fine</span></div>
<div class="a" style="left:1432px;top:342px;width:313px;height:3.5px;background:#e8eaf0;"></div>
<div class="t" style="left:1452px;text-align:left;top:356.4px;line-height:25.2px;font-size:21px;font-weight:bold;color:#fff;-webkit-text-stroke:.5px #fff;"><span class="sx" style="transform:scaleX(.83);transform-origin:0 50%">Vertical</span></div>
<div class="a" style="left:1449px;top:397.5px;width:74px;height:49px;border-radius:8px;background:linear-gradient(#f2f2f4,#e0e0e4);border:1.8px solid #7a7b80;box-shadow:0 0 0 .8px rgba(170,172,180,.55),0 1px 14px 5px rgba(8,14,45,.5);"></div>
<div class="t" style="left:1429px;width:114px;top:410.0px;line-height:24px;font-size:20px;font-weight:bold;color:#111;-webkit-text-stroke:.55px #111;"><span class="sx" style="transform:scaleX(0.8)">Ch1</span></div>
<div class="a" style="left:1449px;top:499.8px;width:74px;height:49px;border-radius:8px;background:linear-gradient(#f2f2f4,#e0e0e4);border:1.8px solid #7a7b80;box-shadow:0 0 0 .8px rgba(170,172,180,.55),0 1px 14px 5px rgba(8,14,45,.5);"></div>
<div class="t" style="left:1429px;width:114px;top:512.3px;line-height:24px;font-size:20px;font-weight:bold;color:#111;-webkit-text-stroke:.55px #111;"><span class="sx" style="transform:scaleX(0.8)">Ch2</span></div>
<div class="a" style="left:1449px;top:602.1px;width:74px;height:49px;border-radius:8px;background:linear-gradient(#f2f2f4,#e0e0e4);border:1.8px solid #7a7b80;box-shadow:0 0 0 .8px rgba(170,172,180,.55),0 1px 14px 5px rgba(8,14,45,.5);"></div>
<div class="t" style="left:1429px;width:114px;top:614.6px;line-height:24px;font-size:20px;font-weight:bold;color:#111;-webkit-text-stroke:.55px #111;"><span class="sx" style="transform:scaleX(0.8)">Ch3</span></div>
<div class="a" style="left:1449px;top:704.4px;width:74px;height:49px;border-radius:8px;background:linear-gradient(#f2f2f4,#e0e0e4);border:1.8px solid #7a7b80;box-shadow:0 0 0 .8px rgba(170,172,180,.55),0 1px 14px 5px rgba(8,14,45,.5);"></div>
<div class="t" style="left:1429px;width:114px;top:716.9px;line-height:24px;font-size:20px;font-weight:bold;color:#111;-webkit-text-stroke:.55px #111;"><span class="sx" style="transform:scaleX(0.8)">Ch4</span></div>
<div class="a" style="left:1449px;top:807px;width:74px;height:49px;border-radius:8px;background:linear-gradient(#f2f2f4,#e0e0e4);border:1.8px solid #7a7b80;box-shadow:0 0 0 .8px rgba(170,172,180,.55),0 1px 14px 5px rgba(8,14,45,.5);"></div>
<div class="t" style="left:1429px;width:114px;top:819.5px;line-height:24px;font-size:20px;font-weight:bold;color:#111;-webkit-text-stroke:.55px #111;"><span class="sx" style="transform:scaleX(0.8)">Logic</span></div>
<div class="a" style="left:1554.5px;top:807px;width:74px;height:49px;border-radius:8px;background:linear-gradient(#f2f2f4,#e0e0e4);border:1.8px solid #7a7b80;box-shadow:0 0 0 .8px rgba(170,172,180,.55),0 1px 14px 5px rgba(8,14,45,.5);"></div>
<div class="t" style="left:1534.5px;width:114px;top:819.5px;line-height:24px;font-size:20px;font-weight:bold;color:#111;-webkit-text-stroke:.55px #111;"><span class="sx" style="transform:scaleX(0.8)">Ref</span></div>
<div class="a" style="left:1660px;top:807px;width:74px;height:49px;border-radius:8px;background:linear-gradient(#f2f2f4,#e0e0e4);border:1.8px solid #7a7b80;box-shadow:0 0 0 .8px rgba(170,172,180,.55),0 1px 14px 5px rgba(8,14,45,.5);"></div>
<div class="t" style="left:1640px;width:114px;top:819.5px;line-height:24px;font-size:20px;font-weight:bold;color:#111;-webkit-text-stroke:.55px #111;"><span class="sx" style="transform:scaleX(0.8)">Math</span></div>
<div class="t" style="left:1688px;text-align:left;top:499.5px;line-height:15.0px;font-size:12.5px;font-weight:bold;color:#e8e8ee;"><span class="sx" style="transform:scaleX(.8);transform-origin:0 50%">Push</span></div>
<div class="t" style="left:1688px;text-align:left;top:513.5px;line-height:15.0px;font-size:12.5px;font-weight:bold;color:#e8e8ee;"><span class="sx" style="transform:scaleX(.8);transform-origin:0 50%">to Zero</span></div>
<div class="t" style="left:1490.5px;width:300px;top:609.6px;line-height:22.8px;font-size:19px;font-weight:bold;color:#fff;-webkit-text-stroke:.5px #fff;"><span class="sx" style="transform:scaleX(.8)">Scale</span></div>
<div class="t" style="left:1695px;text-align:left;top:737.5px;line-height:15.0px;font-size:12.5px;font-weight:bold;color:#e8e8ee;"><span class="sx" style="transform:scaleX(.8);transform-origin:0 50%">Coarse</span></div>
<div class="t" style="left:1695px;text-align:left;top:751.5px;line-height:15.0px;font-size:12.5px;font-weight:bold;color:#e8e8ee;"><span class="sx" style="transform:scaleX(.8);transform-origin:0 50%">Fine</span></div>
<div class="t" style="left:1787px;text-align:left;top:27.4px;line-height:25.2px;font-size:21px;font-weight:bold;color:#fff;-webkit-text-stroke:.5px #fff;"><span class="sx" style="transform:scaleX(.83);transform-origin:0 50%">Trigger</span></div>
<div class="a" style="left:1779px;top:69.5px;width:74px;height:49px;border-radius:8px;background:linear-gradient(#c8c9d0,#b3b4bc);border:1.8px solid #606167;box-shadow:0 0 0 .8px rgba(170,172,180,.55),0 1px 14px 5px rgba(8,14,45,.5);"></div>
<div class="t" style="left:1759px;width:114px;top:82.0px;line-height:24px;font-size:20px;font-weight:bold;color:#111;-webkit-text-stroke:.55px #111;"><span class="sx" style="transform:scaleX(0.8)">Trigger</span></div>
<div class="a" style="left:1779px;top:142px;width:74px;height:49px;border-radius:8px;background:linear-gradient(#f2f2f4,#e0e0e4);border:1.8px solid #7a7b80;box-shadow:0 0 0 .8px rgba(170,172,180,.55),0 1px 14px 5px rgba(8,14,45,.5);"></div>
<div class="t" style="left:1759px;width:114px;top:154.5px;line-height:24px;font-size:20px;font-weight:bold;color:#111;-webkit-text-stroke:.55px #111;"><span class="sx" style="transform:scaleX(0.8)">Source</span></div>
<div class="a" style="left:1779px;top:215.5px;width:74px;height:49px;border-radius:8px;background:linear-gradient(#f2f2f4,#e0e0e4);border:1.8px solid #7a7b80;box-shadow:0 0 0 .8px rgba(170,172,180,.55),0 1px 14px 5px rgba(8,14,45,.5);"></div>
<div class="t" style="left:1759px;width:114px;top:220.0px;line-height:20px;font-size:20px;font-weight:bold;color:#111;-webkit-text-stroke:.55px #111;"><span class="sx" style="transform:scaleX(0.8)">Auto<br>Norm</span></div>
<div class="a" style="left:1989.5px;top:69.5px;width:74px;height:49px;border-radius:8px;background:linear-gradient(#f2f2f4,#e0e0e4);border:1.8px solid #7a7b80;box-shadow:0 0 0 .8px rgba(170,172,180,.55),0 1px 14px 5px rgba(8,14,45,.5);"></div>
<div class="t" style="left:1969.5px;width:114px;top:74.0px;line-height:20px;font-size:20px;font-weight:bold;color:#111;-webkit-text-stroke:.55px #111;"><span class="sx" style="transform:scaleX(0.8)">Run<br>Stop</span></div>
<div class="a" style="left:1989.5px;top:142px;width:74px;height:49px;border-radius:8px;background:linear-gradient(#f2f2f4,#e0e0e4);border:1.8px solid #7a7b80;box-shadow:0 0 0 .8px rgba(170,172,180,.55),0 1px 14px 5px rgba(8,14,45,.5);"></div>
<div class="t" style="left:1969.5px;width:114px;top:154.5px;line-height:24px;font-size:20px;font-weight:bold;color:#111;-webkit-text-stroke:.55px #111;"><span class="sx" style="transform:scaleX(0.8)">Single</span></div>
<div class="a" style="left:1989.5px;top:215.5px;width:74px;height:49px;border-radius:8px;background:linear-gradient(#c8c9d0,#b3b4bc);border:1.8px solid #606167;box-shadow:0 0 0 .8px rgba(170,172,180,.55),0 1px 14px 5px rgba(8,14,45,.5);"></div>
<div class="t" style="left:1969.5px;width:114px;top:220.0px;line-height:20px;font-size:20px;font-weight:bold;color:#111;-webkit-text-stroke:.55px #111;"><span class="sx" style="transform:scaleX(0.8)">Force<br>Trigger</span></div>
<div class="a" style="left:1901px;top:68px;width:41px;height:17px;background:#dadadc;"></div>
<div class="t" style="left:1881px;width:81px;top:67px;line-height:18px;font-size:15px;font-weight:bold;color:#111;"><span class="sx" style="transform:scaleX(.78)">Trig'd</span></div>
<div class="t" style="left:1771px;width:300px;top:103.6px;line-height:22.8px;font-size:19px;font-weight:bold;color:#fff;-webkit-text-stroke:.5px #fff;"><span class="sx" style="transform:scaleX(.8)">Levels</span></div>
<div class="t" style="left:1957px;text-align:left;top:183.5px;line-height:15.0px;font-size:12.5px;font-weight:bold;color:#e8e8ee;"><span class="sx" style="transform:scaleX(.8);transform-origin:0 50%">Push</span></div>
<div class="t" style="left:1943px;text-align:left;top:197.5px;line-height:15.0px;font-size:12.5px;font-weight:bold;color:#e8e8ee;"><span class="sx" style="transform:scaleX(.8);transform-origin:0 50%">for 50%</span></div>
<div class="a" style="left:1768px;top:288px;width:312px;height:3.5px;background:#e8eaf0;"></div>
<div class="t" style="left:1787px;text-align:left;top:303.4px;line-height:25.2px;font-size:21px;font-weight:bold;color:#fff;-webkit-text-stroke:.5px #fff;"><span class="sx" style="transform:scaleX(.83);transform-origin:0 50%">Action</span></div>
<div class="a" style="left:1779px;top:344px;width:74px;height:49px;border-radius:8px;background:linear-gradient(#c8c9d0,#b3b4bc);border:1.8px solid #606167;box-shadow:0 0 0 .8px rgba(170,172,180,.55),0 1px 14px 5px rgba(8,14,45,.5);"></div>
<div class="a" style="left:1884.5px;top:344px;width:74px;height:49px;border-radius:8px;background:linear-gradient(#c8c9d0,#b3b4bc);border:1.8px solid #606167;box-shadow:0 0 0 .8px rgba(170,172,180,.55),0 1px 14px 5px rgba(8,14,45,.5);"></div>
<div class="t" style="left:1864.5px;width:114px;top:348.5px;line-height:20px;font-size:20px;font-weight:bold;color:#111;-webkit-text-stroke:.55px #111;"><span class="sx" style="transform:scaleX(0.8)">Save<br>Load</span></div>
<div class="a" style="left:1990px;top:344px;width:74px;height:49px;border-radius:8px;background:linear-gradient(#3fb4a0,#2e9e8b);border:1.8px solid #5f6f6c;box-shadow:0 0 0 .8px rgba(170,172,180,.55),0 1px 14px 5px rgba(8,14,45,.5);"></div>
<div class="t" style="left:1970px;width:114px;top:356.5px;line-height:24px;font-size:20px;font-weight:bold;color:#111;-webkit-text-stroke:.55px #111;"><span class="sx" style="transform:scaleX(0.8)">Autoset</span></div>
<div class="a" style="left:1779px;top:417px;width:74px;height:49px;border-radius:8px;background:linear-gradient(#f2f2f4,#e0e0e4);border:1.8px solid #7a7b80;box-shadow:0 0 0 .8px rgba(170,172,180,.55),0 1px 14px 5px rgba(8,14,45,.5);"></div>
<div class="t" style="left:1759px;width:114px;top:421.5px;line-height:20px;font-size:20px;font-weight:bold;color:#111;-webkit-text-stroke:.55px #111;"><span class="sx" style="transform:scaleX(0.8)">Touch<br>Lock</span></div>
<div class="a" style="left:1884.5px;top:417px;width:74px;height:49px;border-radius:8px;background:linear-gradient(#c8c9d0,#b3b4bc);border:1.8px solid #606167;box-shadow:0 0 0 .8px rgba(170,172,180,.55),0 1px 14px 5px rgba(8,14,45,.5);"></div>
<div class="t" style="left:1864.5px;width:114px;top:421.5px;line-height:20px;font-size:20px;font-weight:bold;color:#111;-webkit-text-stroke:.55px #111;"><span class="sx" style="transform:scaleX(0.8)">Clear<br>Screen</span></div>
<div class="a" style="left:1990px;top:417px;width:74px;height:49px;border-radius:8px;background:linear-gradient(#3fb4a0,#2e9e8b);border:1.8px solid #5f6f6c;box-shadow:0 0 0 .8px rgba(170,172,180,.55),0 1px 14px 5px rgba(8,14,45,.5);"></div>
<div class="t" style="left:1970px;width:114px;top:429.5px;line-height:24px;font-size:20px;font-weight:bold;color:#111;-webkit-text-stroke:.55px #111;"><span class="sx" style="transform:scaleX(0.8)">Preset</span></div>
<div class="a" style="left:1768px;top:487.5px;width:312px;height:3.5px;background:#e8eaf0;"></div>
<div class="t" style="left:1787px;text-align:left;top:500.4px;line-height:25.2px;font-size:21px;font-weight:bold;color:#fff;-webkit-text-stroke:.5px #fff;"><span class="sx" style="transform:scaleX(.83);transform-origin:0 50%">Analysis</span></div>
<div class="t" style="left:1969px;text-align:left;top:615.5px;line-height:15.0px;font-size:12.5px;font-weight:bold;color:#e8e8ee;"><span class="sx" style="transform:scaleX(.8);transform-origin:0 50%">Push</span></div>
<div class="t" style="left:1952px;text-align:left;top:629.5px;line-height:15.0px;font-size:12.5px;font-weight:bold;color:#e8e8ee;"><span class="sx" style="transform:scaleX(.8);transform-origin:0 50%">to Select</span></div>
<div class="a" style="left:1779px;top:661px;width:74px;height:49px;border-radius:8px;background:linear-gradient(#c8c9d0,#b3b4bc);border:1.8px solid #606167;box-shadow:0 0 0 .8px rgba(170,172,180,.55),0 1px 14px 5px rgba(8,14,45,.5);"></div>
<div class="t" style="left:1759px;width:114px;top:673.5px;line-height:24px;font-size:20px;font-weight:bold;color:#111;-webkit-text-stroke:.55px #111;"><span class="sx" style="transform:scaleX(0.8)">Cursor</span></div>
<div class="a" style="left:1884.5px;top:661px;width:74px;height:49px;border-radius:8px;background:linear-gradient(#c8c9d0,#b3b4bc);border:1.8px solid #606167;box-shadow:0 0 0 .8px rgba(170,172,180,.55),0 1px 14px 5px rgba(8,14,45,.5);"></div>
<div class="t" style="left:1864.5px;width:114px;top:673.5px;line-height:24px;font-size:20px;font-weight:bold;color:#111;-webkit-text-stroke:.55px #111;"><span class="sx" style="transform:scaleX(0.8)">Meas</span></div>
<div class="a" style="left:1990px;top:661px;width:74px;height:49px;border-radius:8px;background:linear-gradient(#c8c9d0,#b3b4bc);border:1.8px solid #606167;box-shadow:0 0 0 .8px rgba(170,172,180,.55),0 1px 14px 5px rgba(8,14,45,.5);"></div>
<div class="a" style="left:1779px;top:734px;width:74px;height:49px;border-radius:8px;background:linear-gradient(#c8c9d0,#b3b4bc);border:1.8px solid #606167;box-shadow:0 0 0 .8px rgba(170,172,180,.55),0 1px 14px 5px rgba(8,14,45,.5);"></div>
<div class="t" style="left:1759px;width:114px;top:738.5px;line-height:20px;font-size:20px;font-weight:bold;color:#111;-webkit-text-stroke:.55px #111;"><span class="sx" style="transform:scaleX(0.8)">Quick<br>Meas</span></div>
<div class="a" style="left:1884.5px;top:734px;width:74px;height:49px;border-radius:8px;background:linear-gradient(#c8c9d0,#b3b4bc);border:1.8px solid #606167;box-shadow:0 0 0 .8px rgba(170,172,180,.55),0 1px 14px 5px rgba(8,14,45,.5);"></div>
<div class="t" style="left:1864.5px;width:114px;top:746.5px;line-height:24px;font-size:20px;font-weight:bold;color:#111;-webkit-text-stroke:.55px #111;"><span class="sx" style="transform:scaleX(0.8)">Search</span></div>
<div class="a" style="left:1990px;top:734px;width:74px;height:49px;border-radius:8px;background:linear-gradient(#c8c9d0,#b3b4bc);border:1.8px solid #606167;box-shadow:0 0 0 .8px rgba(170,172,180,.55),0 1px 14px 5px rgba(8,14,45,.5);"></div>
<div class="t" style="left:1970px;width:114px;top:746.5px;line-height:24px;font-size:20px;font-weight:bold;color:#111;-webkit-text-stroke:.55px #111;"><span class="sx" style="transform:scaleX(0.8)">FFT</span></div>
<div class="a" style="left:1779px;top:806.5px;width:74px;height:49px;border-radius:8px;background:linear-gradient(#f2f2f4,#e0e0e4);border:2.2px solid #2ec72e;box-shadow:0 0 0 .8px rgba(170,172,180,.55),0 1px 14px 5px rgba(8,14,45,.5);"></div>
<div class="t" style="left:1759px;width:114px;top:819.0px;line-height:24px;font-size:20px;font-weight:bold;color:#111;-webkit-text-stroke:.55px #111;"><span class="sx" style="transform:scaleX(0.72)">Protocol</span></div>
<div class="a" style="left:1884.5px;top:806.5px;width:74px;height:49px;border-radius:8px;background:linear-gradient(#f2f2f4,#e0e0e4);border:1.8px solid #7a7b80;box-shadow:0 0 0 .8px rgba(170,172,180,.55),0 1px 14px 5px rgba(8,14,45,.5);"></div>
<div class="t" style="left:1864.5px;width:114px;top:819.0px;line-height:24px;font-size:20px;font-weight:bold;color:#111;-webkit-text-stroke:.55px #111;"><span class="sx" style="transform:scaleX(0.8)">Gen</span></div>
<div class="a" style="left:1990px;top:806.5px;width:74px;height:49px;border-radius:8px;background:linear-gradient(#c8c9d0,#b3b4bc);border:1.8px solid #606167;box-shadow:0 0 0 .8px rgba(170,172,180,.55),0 1px 14px 5px rgba(8,14,45,.5);"></div>
<svg class="a" style="left:0;top:0" width="2110" height="900" viewBox="0 0 2110 900">
<defs><radialGradient id="kg" cx="40%" cy="30%" r="75%"><stop offset="0" stop-color="#c8c9cf"/><stop offset="1" stop-color="#9c9da5"/></radialGradient><radialGradient id="kc" cx="50%" cy="35%" r="65%"><stop offset="0" stop-color="#c2c3c9"/><stop offset="1" stop-color="#b0b1b8"/></radialGradient><linearGradient id="wr" x1="0" y1="0" x2="0" y2="1"><stop offset="0" stop-color="#f4f4f6"/><stop offset="1" stop-color="#d8d8dc"/></linearGradient><linearGradient id="kr" x1="0" y1="0" x2="0" y2="1"><stop offset="0" stop-color="#6a6b71"/><stop offset="1" stop-color="#35363b"/></linearGradient><filter id="sh" x="-50%" y="-50%" width="200%" height="200%"><feGaussianBlur stdDeviation="7"/></filter></defs>
<circle cx="1643.7" cy="113" r="41.5" fill="#081030" opacity=".6" filter="url(#sh)"/>
<circle cx="1640.7" cy="108" r="35.7" fill="url(#kg)" stroke="url(#kr)" stroke-width="3.6"/>
<circle cx="1641.7" cy="110" r="27.8" fill="url(#kc)"/>
<path d="M1640.7 77.3L1644.3 71.0L1637.1 71.0Z" fill="#55565c"/>
<path d="M1667.3 92.7L1674.5 92.6L1670.9 86.4Z" fill="#55565c"/>
<path d="M1667.3 123.3L1670.9 129.6L1674.5 123.4Z" fill="#55565c"/>
<path d="M1640.7 138.7L1637.1 145.0L1644.3 145.0Z" fill="#55565c"/>
<path d="M1614.1 92.7L1610.5 86.4L1606.9 92.6Z" fill="#55565c"/>
<path d="M1614.1 123.4L1606.9 123.4L1610.5 129.6Z" fill="#55565c"/>
<circle cx="1643.8" cy="289.6" r="50" fill="#081030" opacity=".6" filter="url(#sh)"/>
<circle cx="1640.8" cy="284.6" r="44.2" fill="url(#kg)" stroke="url(#kr)" stroke-width="3.6"/>
<circle cx="1641.8" cy="286.6" r="34.0" fill="url(#kc)"/>
<path d="M1640.8 245.4L1644.4 239.1L1637.2 239.1Z" fill="#55565c"/>
<path d="M1674.7 265.0L1682.0 265.0L1678.4 258.7Z" fill="#55565c"/>
<path d="M1674.7 304.2L1678.4 310.5L1682.0 304.2Z" fill="#55565c"/>
<path d="M1640.8 323.8L1637.2 330.1L1644.4 330.1Z" fill="#55565c"/>
<path d="M1606.9 265.0L1603.2 258.7L1599.6 265.0Z" fill="#55565c"/>
<path d="M1606.9 304.2L1599.6 304.2L1603.2 310.5Z" fill="#55565c"/>
<circle cx="1643.8" cy="478.3" r="56.7" fill="#081030" opacity=".6" filter="url(#sh)"/>
<circle cx="1640.8" cy="473.3" r="52.7" fill="url(#wr)" stroke="#b8b8be" stroke-width="1"/>
<circle cx="1640.8" cy="473.3" r="41" fill="none" stroke="#c4c4ca" stroke-width="2"/>
<circle cx="1640.8" cy="473.3" r="36.2" fill="url(#kg)" stroke="url(#kr)" stroke-width="3.6"/>
<circle cx="1641.8" cy="475.3" r="28.1" fill="url(#kc)"/>
<path d="M1640.8 442.1L1644.4 435.8L1637.2 435.8Z" fill="#55565c"/>
<path d="M1667.8 457.7L1675.1 457.7L1671.5 451.4Z" fill="#55565c"/>
<path d="M1667.8 488.9L1671.5 495.2L1675.1 488.9Z" fill="#55565c"/>
<path d="M1640.8 504.5L1637.2 510.8L1644.4 510.8Z" fill="#55565c"/>
<path d="M1613.8 457.7L1610.1 451.4L1606.5 457.7Z" fill="#55565c"/>
<path d="M1613.8 488.9L1606.5 488.9L1610.1 495.2Z" fill="#55565c"/>
<circle cx="1643.8" cy="708" r="65.5" fill="#081030" opacity=".6" filter="url(#sh)"/>
<circle cx="1640.8" cy="703" r="61.5" fill="url(#wr)" stroke="#b8b8be" stroke-width="1"/>
<circle cx="1640.8" cy="703" r="49.5" fill="none" stroke="#c4c4ca" stroke-width="2"/>
<circle cx="1640.8" cy="703" r="44.7" fill="url(#kg)" stroke="url(#kr)" stroke-width="3.6"/>
<circle cx="1641.8" cy="705" r="34.4" fill="url(#kc)"/>
<path d="M1640.8 663.3L1644.4 657.0L1637.2 657.0Z" fill="#55565c"/>
<path d="M1675.2 683.1L1682.4 683.1L1678.8 676.9Z" fill="#55565c"/>
<path d="M1675.2 722.9L1678.8 729.1L1682.4 722.9Z" fill="#55565c"/>
<path d="M1640.8 742.7L1637.2 749.0L1644.4 749.0Z" fill="#55565c"/>
<path d="M1606.4 683.1L1602.8 676.9L1599.2 683.1Z" fill="#55565c"/>
<path d="M1606.4 722.9L1599.2 722.9L1602.8 729.1Z" fill="#55565c"/>
<circle cx="1924" cy="172" r="41.5" fill="#081030" opacity=".6" filter="url(#sh)"/>
<circle cx="1921" cy="167" r="35.7" fill="url(#kg)" stroke="url(#kr)" stroke-width="3.6"/>
<circle cx="1922" cy="169" r="27.8" fill="url(#kc)"/>
<path d="M1921.0 136.3L1924.6 130.0L1917.4 130.0Z" fill="#55565c"/>
<path d="M1947.6 151.7L1954.8 151.6L1951.2 145.4Z" fill="#55565c"/>
<path d="M1947.6 182.3L1951.2 188.6L1954.8 182.4Z" fill="#55565c"/>
<path d="M1921.0 197.7L1917.4 204.0L1924.6 204.0Z" fill="#55565c"/>
<path d="M1894.4 151.7L1890.8 145.4L1887.2 151.6Z" fill="#55565c"/>
<path d="M1894.4 182.3L1887.2 182.4L1890.8 188.6Z" fill="#55565c"/>
<circle cx="1924" cy="594.6" r="50" fill="#081030" opacity=".6" filter="url(#sh)"/>
<circle cx="1921" cy="589.6" r="44.2" fill="url(#kg)" stroke="url(#kr)" stroke-width="3.6"/>
<circle cx="1922" cy="591.6" r="34.0" fill="url(#kc)"/>
<path d="M1921.0 550.4L1924.6 544.1L1917.4 544.1Z" fill="#55565c"/>
<path d="M1954.9 570.0L1962.2 570.0L1958.6 563.7Z" fill="#55565c"/>
<path d="M1954.9 609.2L1958.6 615.5L1962.2 609.2Z" fill="#55565c"/>
<path d="M1921.0 628.8L1917.4 635.1L1924.6 635.1Z" fill="#55565c"/>
<path d="M1887.1 570.0L1883.4 563.7L1879.8 570.0Z" fill="#55565c"/>
<path d="M1887.1 609.2L1879.8 609.2L1883.4 615.5Z" fill="#55565c"/>
<path d="M1597.0 151H1614.0V149.5H1597.0Z" fill="#dcdde2"/>
<path d="M1599.0 149.5L1601.5 142H1609.5L1612.0 149.5Z" fill="#dcdde2"/>
<path d="M1598.5 137H1612.5L1605.5 141.5Z" fill="#dcdde2"/>
<rect x="1604.3" y="134" width="2.4" height="4" fill="#dcdde2"/>
<path d="M1589.0 336H1606.0V334.5H1589.0Z" fill="#dcdde2"/>
<path d="M1591.0 334.5L1593.5 327H1601.5L1604.0 334.5Z" fill="#dcdde2"/>
<path d="M1590.5 322H1604.5L1597.5 326.5Z" fill="#dcdde2"/>
<rect x="1596.3" y="319" width="2.4" height="4" fill="#dcdde2"/>
<path d="M1586.0 526H1603.0V524.5H1586.0Z" fill="#dcdde2"/>
<path d="M1588.0 524.5L1590.5 517H1598.5L1601.0 524.5Z" fill="#dcdde2"/>
<path d="M1587.5 512H1601.5L1594.5 516.5Z" fill="#dcdde2"/>
<rect x="1593.3" y="509" width="2.4" height="4" fill="#dcdde2"/>
<path d="M1579.0 765H1596.0V763.5H1579.0Z" fill="#dcdde2"/>
<path d="M1581.0 763.5L1583.5 756H1591.5L1594.0 763.5Z" fill="#dcdde2"/>
<path d="M1580.5 751H1594.5L1587.5 755.5Z" fill="#dcdde2"/>
<rect x="1586.3" y="748" width="2.4" height="4" fill="#dcdde2"/>
<path d="M1871.5 208H1888.5V206.5H1871.5Z" fill="#dcdde2"/>
<path d="M1873.5 206.5L1876 199H1884L1886.5 206.5Z" fill="#dcdde2"/>
<path d="M1873 194H1887L1880 198.5Z" fill="#dcdde2"/>
<rect x="1878.8" y="191" width="2.4" height="4" fill="#dcdde2"/>
<path d="M1869.0 640H1886.0V638.5H1869.0Z" fill="#dcdde2"/>
<path d="M1871.0 638.5L1873.5 631H1881.5L1884.0 638.5Z" fill="#dcdde2"/>
<path d="M1870.5 626H1884.5L1877.5 630.5Z" fill="#dcdde2"/>
<rect x="1876.3" y="623" width="2.4" height="4" fill="#dcdde2"/>
<path d="M1601.0 80L1609.0 72.5V87.5Z" fill="#dcdde2"/>
<path d="M1680.5 80L1672.5 72.5V87.5Z" fill="#dcdde2"/>
<path d="M1595.68 245L1588.32 238.1V251.9Z" fill="#dcdde2"/>
<path d="M1597.82 245L1605.18 238.1V251.9Z" fill="#dcdde2"/>
<path d="M1676.82 245L1684.18 238.1V251.9Z" fill="#dcdde2"/>
<path d="M1692.68 245L1685.32 238.1V251.9Z" fill="#dcdde2"/>
<path d="M1582.5 428.0H1597.5L1590 436.0Z" fill="#dcdde2"/>
<path d="M1683.5 436.0H1698.5L1691 428.0Z" fill="#dcdde2"/>
<path d="M1873.5 135.0H1888.5L1881 143.0Z" fill="#dcdde2"/>
<path d="M1955.5 143.0H1970.5L1963 135.0Z" fill="#dcdde2"/>
<path d="M1582.25 637.4H1595.75L1589 644.6Z" fill="#dcdde2"/>
<path d="M1582.25 653.6H1595.75L1589 646.4Z" fill="#dcdde2"/>
<path d="M1685.25 644.6H1698.75L1692 637.4Z" fill="#dcdde2"/>
<path d="M1685.25 646.4H1698.75L1692 653.6Z" fill="#dcdde2"/>
<path d="M1796 358Q1796 355 1799 355H1804L1807 351H1825L1828 355H1833Q1836 355 1836 358V378Q1836 381 1833 381H1799Q1796 381 1796 378Z" fill="#000"/>
<circle cx="1816" cy="368" r="7.3" fill="none" stroke="#c8c9d0" stroke-width="1.6"/>
<path d="M1826 585A10.5 10.5 0 1 0 1826 598" stroke="#dcdde2" stroke-width="3" fill="none"/>
<path d="M1819 577L1829 583L1820 590Z" fill="#dcdde2"/>
<path d="M2036.0 685.5L2040.0 685.5" stroke="#000" stroke-width="1.6"/>
<path d="M2034.8 690.0L2038.3 692.0" stroke="#000" stroke-width="1.6"/>
<path d="M2031.5 693.3L2033.5 696.8" stroke="#000" stroke-width="1.6"/>
<path d="M2027.0 694.5L2027.0 698.5" stroke="#000" stroke-width="1.6"/>
<path d="M2022.5 693.3L2020.5 696.8" stroke="#000" stroke-width="1.6"/>
<path d="M2019.2 690.0L2015.7 692.0" stroke="#000" stroke-width="1.6"/>
<path d="M2018.0 685.5L2014.0 685.5" stroke="#000" stroke-width="1.6"/>
<path d="M2019.2 681.0L2015.7 679.0" stroke="#000" stroke-width="1.6"/>
<path d="M2022.5 677.7L2020.5 674.2" stroke="#000" stroke-width="1.6"/>
<path d="M2027.0 676.5L2027.0 672.5" stroke="#000" stroke-width="1.6"/>
<path d="M2031.5 677.7L2033.5 674.2" stroke="#000" stroke-width="1.6"/>
<path d="M2034.8 681.0L2038.3 679.0" stroke="#000" stroke-width="1.6"/>
<circle cx="2027" cy="685.5" r="6.5" fill="#000"/>
<path d="M2023.5 689.0L2030.5 682.0" stroke="#c8c9d0" stroke-width="1.6"/>
<rect x="2005.0" y="818" width="13" height="12.5" rx="1" fill="#000"/>
<rect x="2022.5" y="818" width="13" height="12.5" rx="1" fill="#000"/>
<rect x="2040.0" y="818" width="13" height="12.5" rx="1" fill="#000"/>
<rect x="2005.0" y="835" width="13" height="12.5" rx="1" fill="#000"/>
<rect x="2022.5" y="835" width="13" height="12.5" rx="1" fill="#000"/>
<rect x="2040.0" y="835" width="13" height="12.5" rx="1" fill="#000"/>
</svg>
</body></html>
